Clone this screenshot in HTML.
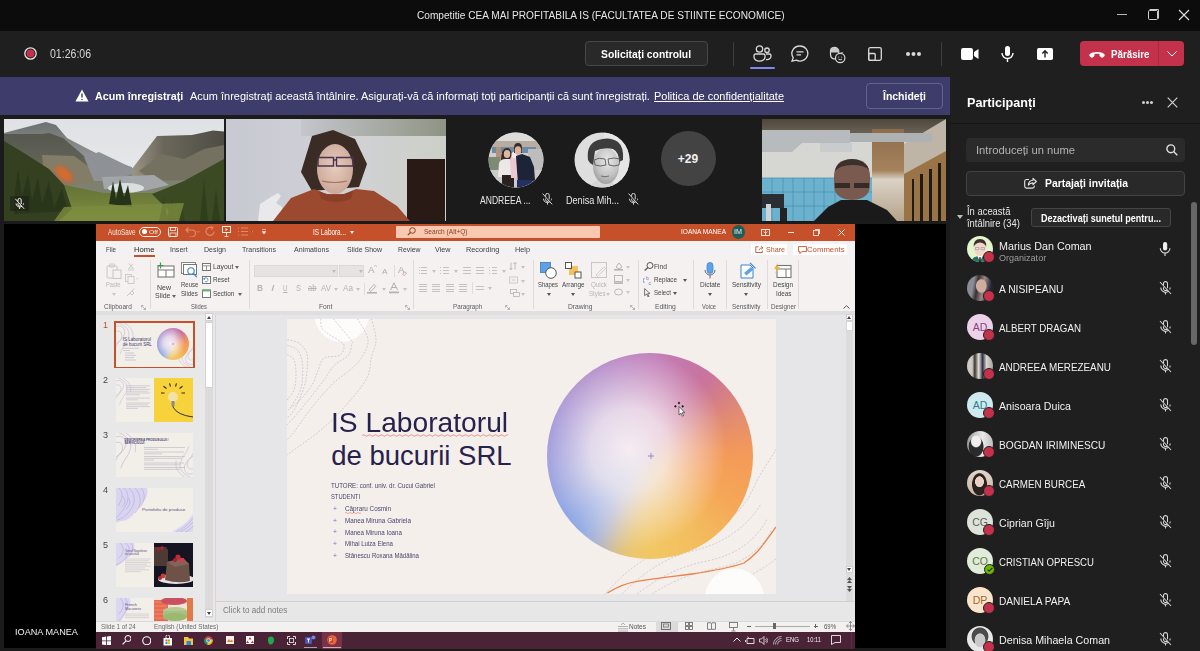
<!DOCTYPE html>
<html><head><meta charset="utf-8">
<style>
*{margin:0;padding:0;box-sizing:border-box}
html,body{width:1200px;height:651px;overflow:hidden;background:#1b1b1b;font-family:"Liberation Sans",sans-serif;position:relative}
.a{position:absolute}
.s{position:absolute;white-space:nowrap;transform-origin:0 50%;line-height:1}
#title{left:0;top:0;width:1200px;height:31px;background:#0c0c0c;color:#e8e8e8}
#tb{left:0;top:31px;width:1200px;height:46px;background:#1f1f1f}
#banner{left:0;top:77px;width:950px;height:38px;background:#3d3c6a;color:#fff}
#panel{left:950px;top:77px;width:250px;height:574px;background:#1f1f1f;color:#fff}
#stage{left:0;top:0;width:950px;height:651px}
#share{left:4px;top:224px;width:942px;height:424px;background:#000}
#ppt{left:96px;top:224px;width:759px;height:424px;background:#f3f2f1;overflow:hidden}
</style></head><body>
<!-- TITLE BAR -->
<div id="title" class="a">
  <div class="s" style="left:417px;top:10px;font-size:11.5px;transform:scaleX(0.88);color:#e6e6e6">Competitie CEA MAI PROFITABILA IS (FACULTATEA DE STIINTE ECONOMICE)</div>
  <div class="a" style="left:1117px;top:13.5px;width:10px;height:1px;background:#b8b8b8"></div>
  <div class="a" style="left:1147.5px;top:10px;width:10px;height:10px;border:1px solid #cfcfcf;border-radius:1.5px"></div>
  <div class="a" style="left:1149px;top:8.5px;width:10px;height:10px;border-top:1px solid #cfcfcf;border-right:1px solid #cfcfcf;border-radius:1.5px"></div>
  <svg class="a" style="left:1178px;top:9px" width="12" height="12" viewBox="0 0 12 12"><path d="M1 1L11 11M11 1L1 11" stroke="#e0e0e0" stroke-width="1.1"/></svg>
</div>
<!-- TOOLBAR -->
<div id="tb" class="a">
  <svg class="a" style="left:23.7px;top:16.3px" width="14" height="14" viewBox="0 0 14 14"><circle cx="6.5" cy="6.5" r="5.7" fill="none" stroke="#e8e8e8" stroke-width="1.3"/><circle cx="6.5" cy="6.5" r="4" fill="#c4314b"/></svg>
  <div class="s" style="left:50px;top:17px;font-size:12px;transform:scaleX(0.88);color:#d6d6d6">01:26:06</div>
  <div class="a" style="left:585px;top:10px;width:123px;height:25px;border:1px solid #474747;border-radius:4px;background:#292929"></div>
  <div class="s" style="left:601px;top:18.2px;font-size:11px;font-weight:bold;transform:scaleX(0.938);color:#fff">Solicitați controlul</div>
  <div class="a" style="left:733px;top:11px;width:1px;height:24px;background:#3e3e3e"></div>
  <!-- people -->
  <svg class="a" style="left:753px;top:14px" width="19" height="17" viewBox="0 0 19 17" fill="none" stroke="#d9d9d9" stroke-width="1.3">
    <circle cx="6.5" cy="4" r="3.2"/><circle cx="14" cy="5.2" r="2.2"/>
    <path d="M1 10.5a1.5 1.5 0 0 1 1.5-1.5h8a1.5 1.5 0 0 1 1.5 1.5v1.5a5 3.8 0 0 1-11 0z"/>
    <path d="M13 9h3.5a1.5 1.5 0 0 1 1.5 1.5v.8a4 3.3 0 0 1-5 3.2"/>
  </svg>
  <div class="a" style="left:750px;top:36px;width:25px;height:2px;border-radius:1px;background:#7f85f5"></div>
  <!-- chat -->
  <svg class="a" style="left:791px;top:14px" width="18" height="17" viewBox="0 0 18 17" fill="none" stroke="#d9d9d9" stroke-width="1.3">
    <path d="M9 1a8 7.5 0 1 1-3.8 14.2L1 16.2l1.2-3.6A8 7.5 0 0 1 9 1z"/><path d="M5.5 6.8h7M5.5 9.8h4.5"/>
  </svg>
  <!-- reactions -->
  <svg class="a" style="left:829px;top:14.5px" width="18" height="18" viewBox="0 0 18 18" fill="none" stroke="#d9d9d9" stroke-width="1.2">
    <path d="M1.5 5Q1.5 1.8 5.2 1.4 9.2 1.6 9.8 5V8L12.5 7 8.2 12Q6.5 13.2 4.5 12.8 1.5 12 1.5 8.5z"/>
    <path d="M1.5 5Q1.5 1.8 5.2 1.4 9.2 1.6 9.8 5V6.5H1.5z" fill="#c9c9c9" stroke="none"/>
    <circle cx="11.2" cy="12" r="4.7" fill="#1f1f1f"/>
    <circle cx="9.8" cy="11" r=".55" fill="#d9d9d9" stroke="none"/><circle cx="12.6" cy="11" r=".55" fill="#d9d9d9" stroke="none"/><path d="M9.4 13.1q1.8 1.5 3.6 0" stroke-width="1"/>
  </svg>
  <!-- rooms -->
  <svg class="a" style="left:868px;top:16px" width="14" height="14" viewBox="0 0 14 14" fill="none" stroke="#d9d9d9" stroke-width="1.3">
    <rect x=".7" y=".7" width="12.6" height="12.6" rx="1.5"/><rect x=".7" y="6.5" width="6.5" height="6.8" rx="1"/>
  </svg>
  <!-- dots -->
  <div class="a" style="left:906px;top:21px;width:4px;height:4px;border-radius:50%;background:#d9d9d9;box-shadow:5.5px 0 #d9d9d9,11px 0 #d9d9d9"></div>
  <div class="a" style="left:941px;top:11px;width:1px;height:24px;background:#3e3e3e"></div>
  <!-- camera -->
  <svg class="a" style="left:961px;top:17px" width="18" height="12" viewBox="0 0 18 12"><rect x="0" y="0" width="12" height="12" rx="2.2" fill="#fff"/><path d="M13 4l4.5-3v10L13 8z" fill="#fff"/></svg>
  <!-- mic -->
  <svg class="a" style="left:1001px;top:15px" width="13" height="16" viewBox="0 0 13 16" fill="none" stroke="#fff" stroke-width="1.4"><rect x="4" y="0" width="5" height="10" rx="2.5" fill="#fff" stroke="none"/><path d="M1 7a5.5 5.5 0 0 0 11 0M6.5 12.5V16"/></svg>
  <!-- share -->
  <svg class="a" style="left:1037px;top:17px" width="16" height="12" viewBox="0 0 16 12"><rect x="0" y="0" width="16" height="12" rx="1.8" fill="#fff"/><path d="M8 9.5V3M5.3 5.5L8 2.8l2.7 2.7" stroke="#1f1f1f" stroke-width="1.4" fill="none"/></svg>
  <!-- leave -->
  <div class="a" style="left:1080px;top:10px;width:104px;height:25px;border-radius:4px;background:#c4314b"></div>
  <div class="a" style="left:1158px;top:10px;width:1px;height:25px;background:#a82a40"></div>
  <svg class="a" style="left:1088.5px;top:19.5px" width="16" height="7" viewBox="0 0 16 7"><path d="M.6 3.2C3 .3 13 .3 15.4 3.2 15.9 3.8 15.8 4.6 15.3 5.2L14.2 6.3C13.7 6.8 12.9 6.8 12.4 6.4L10.9 5.2C10.5 4.9 10.4 4.4 10.5 3.9L10.7 3.2C9 2.6 7 2.6 5.3 3.2L5.5 3.9C5.6 4.4 5.5 4.9 5.1 5.2L3.6 6.4C3.1 6.8 2.3 6.8 1.8 6.3L.7 5.2C.2 4.6.1 3.8.6 3.2z" fill="#fff"/></svg>
  <div class="s" style="left:1110.7px;top:18.2px;font-size:11px;font-weight:bold;transform:scaleX(0.887);color:#fff">Părăsire</div>
  <svg class="a" style="left:1166.5px;top:20px" width="10" height="6" viewBox="0 0 10 6"><path d="M.5.5L5 5 9.5.5" stroke="#fff" stroke-width="1" fill="none"/></svg>
</div>
<div id="stage" class="a">
  <div class="a" style="left:0;top:115px;width:950px;height:536px;background:#1b1b1b"></div>
  <!-- tile1 landscape -->
  <svg class="a" style="left:4px;top:119px" width="220" height="102" viewBox="0 0 220 102" preserveAspectRatio="none">
    <defs>
      <linearGradient id="sky" x1="0" y1="0" x2="0" y2="1"><stop offset="0" stop-color="#dfe1e4"/><stop offset="1" stop-color="#eceded"/></linearGradient>
      <linearGradient id="m1" x1="0" y1="0" x2="0" y2="1"><stop offset="0" stop-color="#6d706f"/><stop offset="1" stop-color="#a9adae"/></linearGradient>
      <linearGradient id="m2" x1="0" y1="0" x2="0" y2="1"><stop offset="0" stop-color="#55584f"/><stop offset="1" stop-color="#6a6a5c"/></linearGradient>
      <linearGradient id="m3" x1="0" y1="0" x2="1" y2="0"><stop offset="0" stop-color="#9a9484"/><stop offset=".35" stop-color="#6a675a"/><stop offset="1" stop-color="#4e4c44"/></linearGradient>
      <linearGradient id="gr" x1="0" y1="0" x2="0" y2="1"><stop offset="0" stop-color="#56652e"/><stop offset="1" stop-color="#7f8f42"/></linearGradient>
      <radialGradient id="fire"><stop offset="0" stop-color="#e2692a"/><stop offset=".6" stop-color="#d06a30" stop-opacity=".8"/><stop offset="1" stop-color="#c0602a" stop-opacity="0"/></radialGradient>
    </defs>
    <rect width="220" height="102" fill="url(#sky)"/>
    <path d="M0 14L17 9.6 42 3 52 6 63 19 82 29 94 35 111 43 128 48 128 62 0 62z" fill="url(#m1)"/><rect x="0" y="55" width="220" height="30" fill="#7d8270"/>
    <path d="M0 15L38 15 45 14 59 19 80 37 100 56 104 62 0 62z" fill="url(#m2)"/>
    <path d="M38 36L70 37 88 50 103 62 60 68 40 56z" fill="#837d68"/>
    <path d="M80 38L95 33 120 45 135 52 110 62 90 62z" fill="#8e9296"/>
    <path d="M128 50L153 17 188 16 209 11.5 220 12.5 220 60 128 60z" fill="url(#m3)"/>
    <path d="M135 52L158 35 180 40 200 30 220 26 220 60 150 62z" fill="#757160"/>
    <path d="M98 58L150 56 165 66 140 72 100 70z" fill="#a2a6a8"/>
    <ellipse cx="122" cy="69" rx="18" ry="5" fill="#dcdfe2"/>
    <path d="M0 48L30 56 60 66 100 74 150 74 220 60 220 102 0 102z" fill="url(#gr)"/>
    <path d="M0 22L20 34 45 50 60 66 68 90 55 102 0 102z" fill="#34401f"/>
    <path d="M148 75L180 62 220 40 220 102 175 102z" fill="#3b4a22"/>
    <path d="M105 85L109 62 112 80 116 60 120 78 124 66 128 88z" fill="#26331b"/>
    <path d="M10 80L14 50 18 78 24 55 28 82 34 58 38 85 45 62 50 88 58 70 64 92 10 95z" fill="#2a361a"/>
    <path d="M155 102L160 78 163 98 168 80 172 100 177 82 181 102z" fill="#34441e"/>
    <path d="M196 102L200 60 204 102zM208 102L212 70 216 102z" fill="#2f3f1c"/>
    <path d="M60 88L180 84 175 102 50 102z" fill="#7d8c3f" opacity=".8"/>
    <ellipse cx="60" cy="55" rx="14" ry="8" fill="url(#fire)" transform="rotate(40 60 55)"/>
    <rect x="6" y="77" width="19" height="15" rx="1" fill="#1b1d18" opacity=".55"/>
    <g transform="translate(10.5,79)" fill="none" stroke="#f2f2f2" stroke-width="1"><path d="M3.5 3.5V2a1.6 1.6 0 0 1 3.2 0V6M6.4 7.4a1.6 1.6 0 0 1-2.9-1V5.2"/><path d="M1.5 5.4a3.8 3.8 0 0 0 6 2.9M9 5.4a3.8 3.8 0 0 1-.4 1.5M5.1 9.2V11M.8.8l8.8 10"/></g>
  </svg>
  <!-- tile2 webcam -->
  <svg class="a" style="left:226px;top:119px" width="220" height="102" viewBox="0 0 220 102" preserveAspectRatio="none">
    <defs>
      <linearGradient id="wall" x1="0" y1="0" x2="1" y2="0"><stop offset="0" stop-color="#c7c9d2"/><stop offset=".5" stop-color="#d0d1d6"/><stop offset="1" stop-color="#cdd0c8"/></linearGradient>
      <radialGradient id="face" cx=".5" cy=".45" r=".6"><stop offset="0" stop-color="#e8cdbd"/><stop offset="1" stop-color="#c9a596"/></radialGradient>
    </defs>
    <rect width="220" height="102" fill="url(#wall)"/>
    <defs><linearGradient id="ceil2" x1="0" y1="0" x2="1" y2="0"><stop offset="0" stop-color="#c4c6cb"/><stop offset="1" stop-color="#8e9484"/></linearGradient></defs><rect x="75" y="0" width="145" height="17" fill="url(#ceil2)"/>
    <rect x="181" y="40" width="38" height="62" fill="#2a1a15"/>
    <path d="M32 102L34 85 45 78 52 74 55 77 50 84 56 88 56 102z" fill="#e9e9ec"/>
    <path d="M75 53L86 17 107 11 129 20 141 45 133 68 86 72z" fill="#3a2c25"/>
    <ellipse cx="109" cy="50" rx="18" ry="25" fill="url(#face)"/>
    <path d="M92 38.5h15.5v8.5H92zM110.5 38.5h16.5v8.5h-16.5zM107.5 41h3" fill="none" stroke="#4a3350" stroke-width="1.4"/>
    <path d="M96 62q13 3 25 0" stroke="#a86e5f" stroke-width="1.2" fill="none"/>
    <path d="M47 102L65 79 88 70 100 75 118 75 130 70 148 72 171 87 184 102z" fill="#9b4a2f"/>
    <path d="M93 72q16 8 34 0l-2 8q-15 6-30 0z" fill="#8a3f29"/>
  </svg>
  <!-- avatar ANDREEA -->
  <svg class="a" style="left:488px;top:132px" width="56" height="56" viewBox="0 0 56 56">
    <defs><clipPath id="c1"><circle cx="28" cy="28" r="27.5"/></clipPath></defs>
    <g clip-path="url(#c1)">
      <rect width="56" height="56" fill="#cfcfcd"/>
      <rect x="0" y="0" width="56" height="11" fill="#dcdcda"/>
      <rect x="0" y="9" width="56" height="8" fill="#b9ada2"/>
      <rect x="4" y="15" width="44" height="6" fill="#6f8aa6"/>
      <rect x="8" y="15" width="5" height="14" fill="#b59280"/>
      <rect x="40" y="17" width="16" height="24" fill="#bdbdbd"/>
      <rect x="0" y="25" width="12" height="13" fill="#7d8a74"/>
      <rect x="0" y="38" width="56" height="18" fill="#cbcbcb"/>
      <path d="M13 28q0-12 6-12 5 0 5 10l-1 12h-9z" fill="#3a2a24"/>
      <ellipse cx="19" cy="22" rx="3.2" ry="4" fill="#dcb8a6"/>
      <path d="M10 45l1-14q2-4 6-4h5l3 6-1 12z" fill="#ede8e8"/>
      <path d="M14 43h12v13H14z" fill="#2a2220"/>
      <path d="M22 28q1-6 5-6t4 6l2 8-2 10h-8z" fill="#ecc8d2"/>
      <ellipse cx="26.5" cy="23" rx="3" ry="3.2" fill="#f1e8ec"/>
      <path d="M26 16q0-5 4-5t4 5v5h-8z" fill="#3a2c26"/>
      <ellipse cx="30" cy="18.5" rx="3.3" ry="4.3" fill="#d9b3a0"/>
      <path d="M28 24l6-2 8 3 4 10 1 13-5 3H30l-1-12z" fill="#1e2438"/>
      <path d="M29 48h15v8H29z" fill="#253060"/>
    </g>
  </svg>
  <div class="s" style="left:479.5px;top:195.5px;font-size:10.3px;transform:scaleX(0.832);color:#e6e6e6">ANDREEA ...</div>
  <svg class="a" style="left:542px;top:193px" width="11" height="12" viewBox="0 0 11 12" fill="none" stroke="#d6d6d6" stroke-width="1"><path d="M3.6 3.8V2.2a1.8 1.8 0 0 1 3.6 0V6.3M6.9 7.6a1.8 1.8 0 0 1-3.3-.9V5.6"/><path d="M1.4 5.7a4 4 0 0 0 6.4 3.1M9.6 5.7a4 4 0 0 1-.4 1.6M5.5 9.7V11.6M.6.6l9.6 10.8"/></svg>
  <!-- avatar Denisa -->
  <svg class="a" style="left:574px;top:132px" width="56" height="56" viewBox="0 0 56 56">
    <defs><clipPath id="c2"><circle cx="28" cy="28" r="27.5"/></clipPath><radialGradient id="dg" cx=".55" cy=".35" r=".7"><stop offset="0" stop-color="#e8e8e8"/><stop offset=".6" stop-color="#c4c4c4"/><stop offset="1" stop-color="#9a9a9a"/></radialGradient></defs>
    <g clip-path="url(#c2)">
      <rect width="56" height="56" fill="#dedede"/>
      <rect x="30" width="26" height="56" fill="#e6e6e6"/>
      <path d="M16 56q2-8 12-9t14 9z" fill="#d4d4d4"/>
      <ellipse cx="32" cy="34" rx="13" ry="18" fill="url(#dg)"/>
      <path d="M14 28Q12 12 24 8q12-4 20 2 6 5 5 18l-4 2q0-10-6-13-10-2-18 2l-2 14-3-2z" fill="#3c3c3c"/>
      <path d="M20 28q5-3 11-1l1 6q-6 2-11 0zM34 27q6-2 12 0l-1 6q-5 2-10 0z" fill="none" stroke="#5a5a5a" stroke-width=".9"/>
      <path d="M27 44q4 1.5 8 0" stroke="#7a6a6a" stroke-width="1" fill="none"/>
    </g>
  </svg>
  <div class="s" style="left:566px;top:195.5px;font-size:10.3px;transform:scaleX(0.882);color:#e6e6e6">Denisa Mih...</div>
  <svg class="a" style="left:628px;top:193px" width="11" height="12" viewBox="0 0 11 12" fill="none" stroke="#d6d6d6" stroke-width="1"><path d="M3.6 3.8V2.2a1.8 1.8 0 0 1 3.6 0V6.3M6.9 7.6a1.8 1.8 0 0 1-3.3-.9V5.6"/><path d="M1.4 5.7a4 4 0 0 0 6.4 3.1M9.6 5.7a4 4 0 0 1-.4 1.6M5.5 9.7V11.6M.6.6l9.6 10.8"/></svg>
  <!-- +29 -->
  <div class="a" style="left:660.5px;top:130.5px;width:55px;height:55px;border-radius:50%;background:#434343"></div>
  <div class="s" style="left:660.5px;top:153px;width:55px;text-align:center;font-size:12px;font-weight:bold;color:#f0f0f0;transform:none">+29</div>
  <!-- tile3 office -->
  <svg class="a" style="left:762px;top:119px" width="184" height="102" viewBox="0 0 184 102" preserveAspectRatio="none">
    <defs>
      <linearGradient id="ceil" x1="0" y1="0" x2="0" y2="1"><stop offset="0" stop-color="#4f463c"/><stop offset="1" stop-color="#6e6558"/></linearGradient>
      <linearGradient id="corr" x1="0" y1="0" x2="0" y2="1"><stop offset="0" stop-color="#8d6d4c"/><stop offset=".45" stop-color="#a5825c"/><stop offset=".55" stop-color="#d9d3c6"/><stop offset="1" stop-color="#b6a38a"/></linearGradient>
    </defs>
    <rect width="184" height="102" fill="#d6d7d2"/>
    <rect width="184" height="16" fill="url(#ceil)"/>
    <rect x="110" y="10" width="32" height="92" fill="url(#corr)"/>
    <path d="M142 25L184 0 184 102 142 102z" fill="#bfb5a6"/>
    <path d="M142 55L184 32 184 102 142 102z" fill="#9a7446"/>
    <path d="M150 60h2v42h-2zM158 55h3v47h-3zM167 50h3v52h-3zM176 44h3v58h-3z" fill="#1e1a16"/>
    <path d="M0 11h88v13H40l-10 9H0z" fill="#b7bbbd"/>
    <path d="M88 14h82v9H88z" fill="#aeb2b3"/>
    <path d="M58 24h32v9H58z" fill="#c9cccc"/>
    <rect x="0" y="59" width="110" height="43" fill="#6cb2cf"/>
    <path d="M0 59h110M0 73h110M0 87h110" stroke="#4d93b3" stroke-width=".8"/>
    <path d="M10 59v43M21 59v43M31 59v43M42 59v43M52 59v43M62 59v43M73 59v43M84 59v43M94 59v43" stroke="#3c8aaa" stroke-width=".6"/>
    <rect x="0" y="75" width="22" height="14" fill="#2a2e33"/>
    <rect x="4" y="85" width="5" height="17" fill="#cfd3d6"/>
    <rect x="18" y="89" width="7" height="13" fill="#222"/>
    <path d="M72 58q0-18 18-18 18 0 18 18v8q0 14-18 15-18-1-18-15z" fill="#7a5a4f"/>
    <path d="M73 52q2-11 17-12 14 1 17 11-4-5-17-5-12 0-17 6z" fill="#3a302c"/>
    <path d="M73 64h15v5H73zM92 64h15v5H92z" fill="#2a2220" opacity=".85"/>
    <path d="M52 102L66 88 79 81 105 81 125 91 135 102z" fill="#1b1a1a"/>
  </svg>
</div>
<!-- BANNER -->
<div id="banner" class="a">
  <svg class="a" style="left:75px;top:12px" width="14" height="13" viewBox="0 0 14 13"><path d="M7 .5L13.6 12.5H.4z" fill="#fff"/><path d="M7 4.5v4M7 10v1" stroke="#3d3c6a" stroke-width="1.4"/></svg>
  <div class="s" style="left:95px;top:14.2px;font-size:11px;font-weight:bold;transform:scaleX(0.976)">Acum înregistrați</div>
  <div class="s" style="left:190px;top:14.2px;font-size:11px;transform:scaleX(0.995)">Acum înregistrați această întâlnire. Asigurați-vă că informați toți participanții că sunt înregistrați.</div>
  <div class="s" style="left:654px;top:14.2px;font-size:11px;transform:scaleX(0.998);text-decoration:underline">Politica de confidențialitate</div>
  <div class="a" style="left:866.2px;top:6.3px;width:76.7px;height:25.5px;border:1px solid #64638c;border-radius:4px"></div>
  <div class="s" style="left:883px;top:14.2px;font-size:11px;font-weight:bold;transform:scaleX(0.951)">Închideți</div>
</div>
<!-- PANEL -->
<div id="panel" class="a">
  <div class="s" style="left:16.5px;top:19.5px;font-size:12.5px;font-weight:bold;transform:scaleX(1.01);color:#fff">Participanți</div>
  <div class="a" style="left:192px;top:24px;width:3px;height:3px;border-radius:50%;background:#d0d0d0;box-shadow:4px 0 #d0d0d0,8px 0 #d0d0d0"></div>
  <svg class="a" style="left:217px;top:20px" width="11" height="11" viewBox="0 0 11 11"><path d="M.7.7l9.6 9.6M10.3.7L.7 10.3" stroke="#d6d6d6" stroke-width="1.1"/></svg>
  <div class="a" style="left:0;top:46px;width:250px;height:1px;background:#151515"></div>
  <div class="a" style="left:16px;top:60.5px;width:219px;height:24.5px;border-radius:4px;background:#2b2b2b"></div>
  <div class="s" style="left:26px;top:67.5px;font-size:11.5px;transform:scaleX(0.975);color:#b3b3b3">Introduceți un nume</div>
  <svg class="a" style="left:215.5px;top:66.5px" width="12" height="12" viewBox="0 0 12 12" fill="none" stroke="#e0e0e0" stroke-width="1.4"><circle cx="4.8" cy="4.8" r="3.9"/><path d="M7.6 7.6L11.3 11.3"/></svg>
  <div class="a" style="left:16px;top:93.5px;width:219px;height:25px;border-radius:4px;background:#292929;border:1px solid #434343"></div>
  <svg class="a" style="left:74px;top:100px" width="13" height="12" viewBox="0 0 13 12" fill="none" stroke="#e8e8e8" stroke-width="1.1"><path d="M5 2.5H2.5a1.8 1.8 0 0 0-1.8 1.8v5a1.8 1.8 0 0 0 1.8 1.8h6a1.8 1.8 0 0 0 1.8-1.8V8.5"/><path d="M12.3 4.5L9 1.3v1.9C6.5 3.3 4.5 4.8 4.3 8.2 5.5 6.5 7 5.9 9 5.9v1.8z" stroke-linejoin="round"/></svg>
  <div class="s" style="left:94.5px;top:101.3px;font-size:10.5px;font-weight:bold;transform:scaleX(0.988);color:#fff">Partajați invitația</div>
  <svg class="a" style="left:7px;top:138px" width="6" height="4" viewBox="0 0 6 4"><path d="M0 0h6L3 4z" fill="#bdbdbd"/></svg>
  <div class="s" style="left:17px;top:130px;font-size:10px;transform:scaleX(0.94);color:#e6e6e6">În această</div>
  <div class="s" style="left:17px;top:141.5px;font-size:10px;transform:scaleX(0.94);color:#e6e6e6">întâlnire (34)</div>
  <div class="a" style="left:81px;top:131px;width:140px;height:18.5px;border-radius:3px;background:#292929;border:1px solid #454545"></div>
  <div class="s" style="left:91px;top:136px;font-size:10.5px;font-weight:bold;transform:scaleX(0.86);color:#fff">Dezactivați sunetul pentru...</div>
  <div class="a" style="left:240.5px;top:124.5px;width:6px;height:143px;border-radius:3px;background:#676767"></div>
<div class="a" style="left:17px;top:159px;width:26px;height:26px;border-radius:50%;background:#e4f4cc;overflow:hidden"><svg width="26" height="26" viewBox="0 0 26 26" style="position:absolute;left:0;top:0"><path d="M4 26q1-6 9-6t9 6z" fill="#2f6d6a"/><path d="M10.5 20h5l-2.5 6z" fill="#fff"/><path d="M12.4 21h1.2l.4 5h-2z" fill="#222"/><ellipse cx="13" cy="12.5" rx="6" ry="7.5" fill="#f3d6c8"/><path d="M6.8 11q-.5-8 6.2-8t6.2 8q-1-4-6.2-4.5-5.2.5-6.2 4.5z" fill="#3b302b"/><path d="M8.5 11.5h3.5v2.2H8.5zM14 11.5h3.5v2.2H14z" fill="none" stroke="#7a8aa0" stroke-width=".5"/></svg></div>
<div class="a" style="left:33px;top:174px;width:12px;height:12px;border-radius:50%;background:#c4314b;border:1.8px solid #1f1f1f"></div>
<div class="s" style="left:48.5px;top:163.7px;font-size:11px;transform:scaleX(0.977);color:#f0f0f0">Marius Dan Coman</div>
<div class="s" style="left:48.5px;top:175.7px;font-size:9.5px;transform:scaleX(0.95);color:#9b9b9b">Organizator</div>
<svg class="a" style="left:209px;top:165px" width="12" height="14" viewBox="0 0 12 14"><rect x="4" y="0" width="4.2" height="8.5" rx="2.1" fill="#f0f0f0"/><path d="M1.3 6.3a4.8 4.8 0 0 0 9.6 0M6 11v3" stroke="#e0e0e0" stroke-width="1.1" fill="none"/></svg>
<div class="a" style="left:17px;top:198px;width:26px;height:26px;border-radius:50%;background:radial-gradient(ellipse 22% 28% at 55% 42%,#cfae9e 0 85%,transparent 100%),linear-gradient(100deg,#8a8d98 0 25%,#3a3030 40%,#9a8a86 60%,#20263a 85%);overflow:hidden"></div>
<div class="a" style="left:33px;top:213px;width:12px;height:12px;border-radius:50%;background:#c4314b;border:1.8px solid #1f1f1f"></div>
<div class="s" style="left:48.5px;top:206.7px;font-size:11px;transform:scaleX(0.934);color:#f0f0f0">A NISIPEANU</div>
<svg class="a" style="left:209px;top:204px" width="13" height="14" viewBox="0 0 13 14" fill="none" stroke="#d6d6d6" stroke-width="1.05"><path d="M4.5 4.5V2.6a2 2 0 0 1 4 0V7.2M8.2 8.6a2 2 0 0 1-3.7-1.1V6.3"/><path d="M1.8 6.6a4.7 4.7 0 0 0 7.6 3.6M11.2 6.6a4.7 4.7 0 0 1-.5 1.9M6.5 11.3V13.6M1 1l11 12"/></svg>
<div class="a" style="left:17px;top:237px;width:26px;height:26px;border-radius:50%;background:#ebd2e8;overflow:hidden"><span style="position:absolute;left:0;top:0;width:26px;line-height:26px;text-align:center;font-size:10.5px;color:#8b3f7f">AD</span></div>
<div class="a" style="left:33px;top:252px;width:12px;height:12px;border-radius:50%;background:#c4314b;border:1.8px solid #1f1f1f"></div>
<div class="s" style="left:48.5px;top:245.7px;font-size:11px;transform:scaleX(0.886);color:#f0f0f0">ALBERT DRAGAN</div>
<svg class="a" style="left:209px;top:243px" width="13" height="14" viewBox="0 0 13 14" fill="none" stroke="#d6d6d6" stroke-width="1.05"><path d="M4.5 4.5V2.6a2 2 0 0 1 4 0V7.2M8.2 8.6a2 2 0 0 1-3.7-1.1V6.3"/><path d="M1.8 6.6a4.7 4.7 0 0 0 7.6 3.6M11.2 6.6a4.7 4.7 0 0 1-.5 1.9M6.5 11.3V13.6M1 1l11 12"/></svg>
<div class="a" style="left:17px;top:276px;width:26px;height:26px;border-radius:50%;background:linear-gradient(90deg,#cfcac4 0 20%,#3a3434 30%,#e6e0dc 45%,#2e3142 60%,#d8d4cf 75%,#a9a39c);overflow:hidden"></div>
<div class="a" style="left:33px;top:291px;width:12px;height:12px;border-radius:50%;background:#c4314b;border:1.8px solid #1f1f1f"></div>
<div class="s" style="left:48.5px;top:284.7px;font-size:11px;transform:scaleX(0.898);color:#f0f0f0">ANDREEA MEREZEANU</div>
<svg class="a" style="left:209px;top:282px" width="13" height="14" viewBox="0 0 13 14" fill="none" stroke="#d6d6d6" stroke-width="1.05"><path d="M4.5 4.5V2.6a2 2 0 0 1 4 0V7.2M8.2 8.6a2 2 0 0 1-3.7-1.1V6.3"/><path d="M1.8 6.6a4.7 4.7 0 0 0 7.6 3.6M11.2 6.6a4.7 4.7 0 0 1-.5 1.9M6.5 11.3V13.6M1 1l11 12"/></svg>
<div class="a" style="left:17px;top:315px;width:26px;height:26px;border-radius:50%;background:#cfeaef;overflow:hidden"><span style="position:absolute;left:0;top:0;width:26px;line-height:26px;text-align:center;font-size:10.5px;color:#2e7d8a">AD</span></div>
<div class="a" style="left:33px;top:330px;width:12px;height:12px;border-radius:50%;background:#c4314b;border:1.8px solid #1f1f1f"></div>
<div class="s" style="left:48.5px;top:323.7px;font-size:11px;transform:scaleX(0.965);color:#f0f0f0">Anisoara Duica</div>
<svg class="a" style="left:209px;top:321px" width="13" height="14" viewBox="0 0 13 14" fill="none" stroke="#d6d6d6" stroke-width="1.05"><path d="M4.5 4.5V2.6a2 2 0 0 1 4 0V7.2M8.2 8.6a2 2 0 0 1-3.7-1.1V6.3"/><path d="M1.8 6.6a4.7 4.7 0 0 0 7.6 3.6M11.2 6.6a4.7 4.7 0 0 1-.5 1.9M6.5 11.3V13.6M1 1l11 12"/></svg>
<div class="a" style="left:17px;top:354px;width:26px;height:26px;border-radius:50%;background:radial-gradient(ellipse 22% 25% at 35% 40%,#f0eeee 0 80%,transparent 100%),radial-gradient(ellipse 30% 40% at 35% 60%,#2b2b2b 0 90%,transparent 100%),linear-gradient(90deg,#9a9a9a,#e9e9e9 60%,#bdbdbd);overflow:hidden"></div>
<div class="a" style="left:33px;top:369px;width:12px;height:12px;border-radius:50%;background:#c4314b;border:1.8px solid #1f1f1f"></div>
<div class="s" style="left:48.5px;top:362.7px;font-size:11px;transform:scaleX(0.921);color:#f0f0f0">BOGDAN IRIMINESCU</div>
<svg class="a" style="left:209px;top:360px" width="13" height="14" viewBox="0 0 13 14" fill="none" stroke="#d6d6d6" stroke-width="1.05"><path d="M4.5 4.5V2.6a2 2 0 0 1 4 0V7.2M8.2 8.6a2 2 0 0 1-3.7-1.1V6.3"/><path d="M1.8 6.6a4.7 4.7 0 0 0 7.6 3.6M11.2 6.6a4.7 4.7 0 0 1-.5 1.9M6.5 11.3V13.6M1 1l11 12"/></svg>
<div class="a" style="left:17px;top:393px;width:26px;height:26px;border-radius:50%;background:radial-gradient(ellipse 18% 22% at 48% 45%,#e9d0c0 0 90%,transparent 100%),radial-gradient(ellipse 30% 45% at 48% 55%,#2a2220 0 90%,transparent 100%),linear-gradient(#e2d6ca,#c9b4a2);overflow:hidden"></div>
<div class="a" style="left:33px;top:408px;width:12px;height:12px;border-radius:50%;background:#c4314b;border:1.8px solid #1f1f1f"></div>
<div class="s" style="left:48.5px;top:401.7px;font-size:11px;transform:scaleX(0.893);color:#f0f0f0">CARMEN BURCEA</div>
<svg class="a" style="left:209px;top:399px" width="13" height="14" viewBox="0 0 13 14" fill="none" stroke="#d6d6d6" stroke-width="1.05"><path d="M4.5 4.5V2.6a2 2 0 0 1 4 0V7.2M8.2 8.6a2 2 0 0 1-3.7-1.1V6.3"/><path d="M1.8 6.6a4.7 4.7 0 0 0 7.6 3.6M11.2 6.6a4.7 4.7 0 0 1-.5 1.9M6.5 11.3V13.6M1 1l11 12"/></svg>
<div class="a" style="left:17px;top:432px;width:26px;height:26px;border-radius:50%;background:#dde3da;overflow:hidden"><span style="position:absolute;left:0;top:0;width:26px;line-height:26px;text-align:center;font-size:10.5px;color:#5a6456">CG</span></div>
<div class="a" style="left:33px;top:447px;width:12px;height:12px;border-radius:50%;background:#c4314b;border:1.8px solid #1f1f1f"></div>
<div class="s" style="left:48.5px;top:440.7px;font-size:11px;transform:scaleX(0.964);color:#f0f0f0">Ciprian Gîju</div>
<svg class="a" style="left:209px;top:438px" width="13" height="14" viewBox="0 0 13 14" fill="none" stroke="#d6d6d6" stroke-width="1.05"><path d="M4.5 4.5V2.6a2 2 0 0 1 4 0V7.2M8.2 8.6a2 2 0 0 1-3.7-1.1V6.3"/><path d="M1.8 6.6a4.7 4.7 0 0 0 7.6 3.6M11.2 6.6a4.7 4.7 0 0 1-.5 1.9M6.5 11.3V13.6M1 1l11 12"/></svg>
<div class="a" style="left:17px;top:471px;width:26px;height:26px;border-radius:50%;background:#e1ebd9;overflow:hidden"><span style="position:absolute;left:0;top:0;width:26px;line-height:26px;text-align:center;font-size:10.5px;color:#5e7a4a">CO</span></div>
<div class="a" style="left:34px;top:487px;width:11px;height:11px;border-radius:50%;background:#6bb700;border:1.5px solid #1f1f1f"></div>
<svg class="a" style="left:36.5px;top:490px" width="6" height="5" viewBox="0 0 6 5"><path d="M.6 2.6l1.6 1.5L5.4.8" stroke="#1f1f1f" stroke-width="1.1" fill="none"/></svg>
<div class="s" style="left:48.5px;top:479.7px;font-size:11px;transform:scaleX(0.873);color:#f0f0f0">CRISTIAN OPRESCU</div>
<svg class="a" style="left:209px;top:477px" width="13" height="14" viewBox="0 0 13 14" fill="none" stroke="#d6d6d6" stroke-width="1.05"><path d="M4.5 4.5V2.6a2 2 0 0 1 4 0V7.2M8.2 8.6a2 2 0 0 1-3.7-1.1V6.3"/><path d="M1.8 6.6a4.7 4.7 0 0 0 7.6 3.6M11.2 6.6a4.7 4.7 0 0 1-.5 1.9M6.5 11.3V13.6M1 1l11 12"/></svg>
<div class="a" style="left:17px;top:510px;width:26px;height:26px;border-radius:50%;background:#fbe4cc;overflow:hidden"><span style="position:absolute;left:0;top:0;width:26px;line-height:26px;text-align:center;font-size:10.5px;color:#a06b30">DP</span></div>
<div class="a" style="left:33px;top:525px;width:12px;height:12px;border-radius:50%;background:#c4314b;border:1.8px solid #1f1f1f"></div>
<div class="s" style="left:48.5px;top:518.7px;font-size:11px;transform:scaleX(0.923);color:#f0f0f0">DANIELA PAPA</div>
<svg class="a" style="left:209px;top:516px" width="13" height="14" viewBox="0 0 13 14" fill="none" stroke="#d6d6d6" stroke-width="1.05"><path d="M4.5 4.5V2.6a2 2 0 0 1 4 0V7.2M8.2 8.6a2 2 0 0 1-3.7-1.1V6.3"/><path d="M1.8 6.6a4.7 4.7 0 0 0 7.6 3.6M11.2 6.6a4.7 4.7 0 0 1-.5 1.9M6.5 11.3V13.6M1 1l11 12"/></svg>
<div class="a" style="left:17px;top:549px;width:26px;height:26px;border-radius:50%;background:radial-gradient(ellipse 22% 28% at 50% 55%,#c9c9c9 0 90%,transparent 100%),radial-gradient(ellipse 34% 36% at 50% 40%,#4a4a4a 0 90%,transparent 100%),#e8e8e8;overflow:hidden"></div>
<div class="a" style="left:33px;top:564px;width:12px;height:12px;border-radius:50%;background:#c4314b;border:1.8px solid #1f1f1f"></div>
<div class="s" style="left:48.5px;top:557.7px;font-size:11px;transform:scaleX(0.971);color:#f0f0f0">Denisa Mihaela Coman</div>
<svg class="a" style="left:209px;top:555px" width="13" height="14" viewBox="0 0 13 14" fill="none" stroke="#d6d6d6" stroke-width="1.05"><path d="M4.5 4.5V2.6a2 2 0 0 1 4 0V7.2M8.2 8.6a2 2 0 0 1-3.7-1.1V6.3"/><path d="M1.8 6.6a4.7 4.7 0 0 0 7.6 3.6M11.2 6.6a4.7 4.7 0 0 1-.5 1.9M6.5 11.3V13.6M1 1l11 12"/></svg>
</div>
<div id="share" class="a"></div>
<div class="s" style="left:15.0px;top:627.9px;font-size:9.2px;color:#f0f0f0;transform:scaleX(0.994);">IOANA MANEA</div>
<!--PPT-->
<div class="a" style="left:96.0px;top:224.0px;width:759.0px;height:424.0px;background:#f4f1f1"></div>
<div class="a" style="left:96.0px;top:224.0px;width:759.0px;height:17.0px;background:#c5502a"></div>
<div class="s" style="left:108.0px;top:227.8px;font-size:8.3px;color:#fbe9e2;transform:scaleX(0.767);">AutoSave</div>
<div class="a" style="left:139.0px;top:227.0px;width:22.0px;height:9.5px;border:1px solid #fbe9e2;border-radius:5px"></div>
<div class="a" style="left:141.5px;top:229.3px;width:5.0px;height:5.0px;background:#fff;border-radius:50%"></div>
<div class="s" style="left:149.0px;top:228.8px;font-size:6px;color:#fbe9e2;transform:scaleX(1.140);">Off</div>
<svg class="a" style="left:168.0px;top:226.5px;" width="10" height="10" viewBox="0 0 10 10"><rect x=".5" y=".5" width="9" height="9" rx="1" fill="none" stroke="#fbe9e2" stroke-width="1"/><rect x="2.5" y=".5" width="5" height="3" fill="none" stroke="#fbe9e2" stroke-width=".8"/><rect x="2" y="6" width="6" height="3.5" fill="none" stroke="#fbe9e2" stroke-width=".8"/></svg>
<svg class="a" style="left:184.0px;top:226.0px;" width="16" height="11" viewBox="0 0 16 11"><path d="M2 4h6a3.5 3.5 0 0 1 0 7H5M4.5 1.5L2 4l2.5 2.5" fill="none" stroke="#e08a6a" stroke-width="1.1"/><path d="M12.5 5l1.5 1.5L15.5 5" fill="none" stroke="#e08a6a" stroke-width=".8"/></svg>
<svg class="a" style="left:205.0px;top:226.0px;" width="11" height="11" viewBox="0 0 11 11"><path d="M9 5.5A4 4 0 1 1 6.5 1.7M6 .3l2 1.5-1.6 1.8" fill="none" stroke="#e08a6a" stroke-width="1.1"/></svg>
<svg class="a" style="left:222.0px;top:225.5px;" width="9" height="12" viewBox="0 0 9 12"><rect x=".5" y=".5" width="8" height="6" fill="none" stroke="#fbe9e2" stroke-width="1"/><path d="M3.5 2l2.5 1.5L3.5 5z" fill="#fbe9e2"/><path d="M4.5 7v3M2.5 10.5h4" stroke="#fbe9e2" stroke-width=".9"/></svg>
<svg class="a" style="left:237.0px;top:226.0px;" width="17" height="11" viewBox="0 0 17 11"><path d="M1 2h1M4 2h7M1 5.5h1M4 5.5h7M1 9h1M4 9h7M13.5 5l1.2 1.2L16 5" stroke="#e08a6a" stroke-width="1"/></svg>
<svg class="a" style="left:262.0px;top:228.5px;" width="4" height="6" viewBox="0 0 4 6"><path d="M0 .5h4M0 2.5h4L2 5z" fill="#fbe9e2" stroke="#fbe9e2" stroke-width=".6"/></svg>
<div class="s" style="left:313.0px;top:227.8px;font-size:8.3px;color:#fff;transform:scaleX(0.769);">IS Labora...</div>
<svg class="a" style="left:349.5px;top:231.0px;" width="4" height="3" viewBox="0 0 4 3"><path d="M0 0h4L2 3z" fill="#fff"/></svg>
<div class="a" style="left:396.0px;top:225.5px;width:203.5px;height:12.5px;background:#f9c8b0;border-radius:1px"></div>
<svg class="a" style="left:407.0px;top:227.0px;" width="9" height="9" viewBox="0 0 9 9"><circle cx="5.5" cy="3.5" r="2.8" fill="none" stroke="#8a4025" stroke-width="1"/><path d="M3.5 5.5L.8 8.2" stroke="#8a4025" stroke-width="1.1"/></svg>
<div class="s" style="left:423.5px;top:228.0px;font-size:8px;color:#8a4025;transform:scaleX(0.819);">Search (Alt+Q)</div>
<div class="s" style="left:681.0px;top:228.0px;font-size:8px;color:#fff;transform:scaleX(0.816);">IOANA MANEA</div>
<div class="a" style="left:731.7px;top:225.3px;width:13.3px;height:13.3px;background:#1f5e58;border-radius:50%"></div>
<div class="s" style="left:734.3px;top:228.8px;font-size:6.5px;color:#e8f0ee;transform:scaleX(1.108);">IM</div>
<svg class="a" style="left:761.0px;top:228.5px;" width="9" height="7" viewBox="0 0 9 7"><rect x=".5" y=".5" width="8" height="6" fill="none" stroke="#fbe9e2" stroke-width="1"/><path d="M4.5 1v5M2.5 2.5l2 2 2-2" fill="none" stroke="#fbe9e2" stroke-width=".8"/></svg>
<div class="a" style="left:787.5px;top:231.5px;width:6.0px;height:1.0px;background:#fbe9e2"></div>
<svg class="a" style="left:812.5px;top:228.5px;" width="7" height="7" viewBox="0 0 7 7"><rect x=".5" y="1.5" width="5" height="5" fill="none" stroke="#fbe9e2" stroke-width=".9"/><path d="M2 .5h4.5V5" fill="none" stroke="#fbe9e2" stroke-width=".9"/></svg>
<svg class="a" style="left:838.0px;top:229.0px;" width="7" height="7" viewBox="0 0 7 7"><path d="M.5.5l6 6M6.5.5l-6 6" stroke="#fbe9e2" stroke-width="1"/></svg>
<div class="a" style="left:96.0px;top:241.0px;width:759.0px;height:17.0px;background:#f3f1f1"></div>
<div class="s" style="left:106.0px;top:246.2px;font-size:7.6px;color:#3f3f3f;transform:scaleX(0.817);">File</div>
<div class="s" style="left:134.0px;top:246.2px;font-size:7.6px;color:#262626;transform:scaleX(1.006);">Home</div>
<div class="s" style="left:170.0px;top:246.2px;font-size:7.6px;color:#3f3f3f;transform:scaleX(0.926);">Insert</div>
<div class="s" style="left:204.0px;top:246.2px;font-size:7.6px;color:#3f3f3f;transform:scaleX(0.930);">Design</div>
<div class="s" style="left:242.4px;top:246.2px;font-size:7.6px;color:#3f3f3f;transform:scaleX(0.922);">Transitions</div>
<div class="s" style="left:294.0px;top:246.2px;font-size:7.6px;color:#3f3f3f;transform:scaleX(0.931);">Animations</div>
<div class="s" style="left:346.5px;top:246.2px;font-size:7.6px;color:#3f3f3f;transform:scaleX(0.921);">Slide Show</div>
<div class="s" style="left:397.6px;top:246.2px;font-size:7.6px;color:#3f3f3f;transform:scaleX(0.899);">Review</div>
<div class="s" style="left:435.0px;top:246.2px;font-size:7.6px;color:#3f3f3f;transform:scaleX(0.943);">View</div>
<div class="s" style="left:466.0px;top:246.2px;font-size:7.6px;color:#3f3f3f;transform:scaleX(0.961);">Recording</div>
<div class="s" style="left:514.7px;top:246.2px;font-size:7.6px;color:#3f3f3f;transform:scaleX(0.960);">Help</div>
<div class="a" style="left:134.0px;top:254.8px;width:21.0px;height:2.0px;background:#c5502a"></div>
<div class="a" style="left:750.8px;top:243.7px;width:36.2px;height:11.6px;background:#fff"></div>
<svg class="a" style="left:755.0px;top:246.0px;" width="9" height="7" viewBox="0 0 9 7"><path d="M3.5.8H.8v5.7h6.5V4.5M4 4.3C4.5 2.5 6 1.8 7.8 1.8M6.3.3l1.6 1.5-1.6 1.5" fill="none" stroke="#c5502a" stroke-width=".9"/></svg>
<div class="s" style="left:765.5px;top:245.5px;font-size:8px;color:#c5502a;transform:scaleX(0.890);">Share</div>
<div class="a" style="left:793.3px;top:243.7px;width:53.4px;height:11.6px;background:#fff"></div>
<svg class="a" style="left:797.5px;top:246.0px;" width="9" height="8" viewBox="0 0 9 8"><path d="M.6.6h7.8v5H4L1.8 7.5V5.6H.6z" fill="none" stroke="#c5502a" stroke-width=".9"/></svg>
<div class="s" style="left:806.5px;top:245.5px;font-size:8px;color:#c5502a;transform:scaleX(0.970);">Comments</div>
<div class="a" style="left:96.0px;top:258.0px;width:759.0px;height:53.0px;background:#f5f1f1"></div>
<div class="a" style="left:96.0px;top:311.0px;width:759.0px;height:3.5px;background:#e0dede"></div>
<div class="a" style="left:149.7px;top:260.0px;width:0.8px;height:49.0px;background:#dddada"></div>
<div class="a" style="left:248.5px;top:260.0px;width:0.8px;height:49.0px;background:#dddada"></div>
<div class="a" style="left:412.7px;top:260.0px;width:0.8px;height:49.0px;background:#dddada"></div>
<div class="a" style="left:532.5px;top:260.0px;width:0.8px;height:49.0px;background:#dddada"></div>
<div class="a" style="left:637.5px;top:260.0px;width:0.8px;height:49.0px;background:#dddada"></div>
<div class="a" style="left:693.3px;top:260.0px;width:0.8px;height:49.0px;background:#dddada"></div>
<div class="a" style="left:725.8px;top:260.0px;width:0.8px;height:49.0px;background:#dddada"></div>
<div class="a" style="left:766.7px;top:260.0px;width:0.8px;height:49.0px;background:#dddada"></div>
<div class="a" style="left:797.5px;top:260.0px;width:0.8px;height:49.0px;background:#dddada"></div>
<div class="s" style="left:104.0px;top:303.3px;font-size:7.4px;color:#595959;transform:scaleX(0.878);">Clipboard</div>
<div class="s" style="left:191.0px;top:303.3px;font-size:7.4px;color:#595959;transform:scaleX(0.784);">Slides</div>
<div class="s" style="left:319.3px;top:303.3px;font-size:7.4px;color:#595959;transform:scaleX(0.905);">Font</div>
<div class="s" style="left:453.3px;top:303.3px;font-size:7.4px;color:#595959;transform:scaleX(0.845);">Paragraph</div>
<div class="s" style="left:568.0px;top:303.3px;font-size:7.4px;color:#595959;transform:scaleX(0.903);">Drawing</div>
<div class="s" style="left:655.0px;top:303.3px;font-size:7.4px;color:#595959;transform:scaleX(0.919);">Editing</div>
<div class="s" style="left:702.0px;top:303.3px;font-size:7.4px;color:#595959;transform:scaleX(0.773);">Voice</div>
<div class="s" style="left:732.0px;top:303.3px;font-size:7.4px;color:#595959;transform:scaleX(0.856);">Sensitivity</div>
<div class="s" style="left:771.0px;top:303.3px;font-size:7.4px;color:#595959;transform:scaleX(0.844);">Designer</div>
<svg class="a" style="left:141.0px;top:304.5px;" width="5" height="5" viewBox="0 0 5 5"><path d="M.5.5h2M.5.5v2M1.2 1.2l3 3M4.5 2.5v2h-2" fill="none" stroke="#9a9a9a" stroke-width=".7"/></svg>
<svg class="a" style="left:405.2px;top:304.5px;" width="5" height="5" viewBox="0 0 5 5"><path d="M.5.5h2M.5.5v2M1.2 1.2l3 3M4.5 2.5v2h-2" fill="none" stroke="#9a9a9a" stroke-width=".7"/></svg>
<svg class="a" style="left:504.5px;top:304.5px;" width="5" height="5" viewBox="0 0 5 5"><path d="M.5.5h2M.5.5v2M1.2 1.2l3 3M4.5 2.5v2h-2" fill="none" stroke="#9a9a9a" stroke-width=".7"/></svg>
<svg class="a" style="left:629.5px;top:304.5px;" width="5" height="5" viewBox="0 0 5 5"><path d="M.5.5h2M.5.5v2M1.2 1.2l3 3M4.5 2.5v2h-2" fill="none" stroke="#9a9a9a" stroke-width=".7"/></svg>
<svg class="a" style="left:843.0px;top:305.0px;" width="7" height="4" viewBox="0 0 7 4"><path d="M.5 3.5L3.5.7l3 2.8" fill="none" stroke="#555" stroke-width="1"/></svg>
<svg class="a" style="left:106.0px;top:262.5px;" width="16" height="16" viewBox="0 0 16 16"><rect x="1" y="3" width="10" height="12" rx="1" fill="none" stroke="#c8c6c6" stroke-width="1"/><rect x="3.5" y="1" width="5" height="3" rx="1" fill="none" stroke="#c8c6c6" stroke-width="1"/><rect x="7" y="7" width="8" height="8.5" fill="#f5f1f1" stroke="#c8c6c6" stroke-width="1"/></svg>
<div class="s" style="left:106.0px;top:281.3px;font-size:7.4px;color:#b9b6b6;transform:scaleX(0.766);">Paste</div>
<svg class="a" style="left:111.5px;top:292.5px;" width="4" height="3" viewBox="0 0 4 3"><path d="M0 0h4L2 3z" fill="#c8c6c6"/></svg>
<svg class="a" style="left:127.5px;top:263.0px;" width="6" height="8" viewBox="0 0 6 8"><path d="M1 .5l4 5M5 .5l-4 5" stroke="#c8c6c6" stroke-width=".9"/><circle cx="1.3" cy="6.5" r="1.1" fill="none" stroke="#c8c6c6" stroke-width=".7"/><circle cx="4.7" cy="6.5" r="1.1" fill="none" stroke="#c8c6c6" stroke-width=".7"/></svg>
<svg class="a" style="left:125.0px;top:274.0px;" width="14" height="10" viewBox="0 0 14 10"><rect x=".5" y=".5" width="6" height="7" fill="none" stroke="#c8c6c6" stroke-width=".9"/><rect x="3" y="2.5" width="6" height="7" fill="#f5f1f1" stroke="#c8c6c6" stroke-width=".9"/><path d="M11 4l1.2 1.2L13.4 4" fill="none" stroke="#c8c6c6" stroke-width=".7"/></svg>
<svg class="a" style="left:126.0px;top:288.0px;" width="9" height="9" viewBox="0 0 9 9"><path d="M1 8l3-3M4 5l2-2 2 2-2 2zM6 3l2-2.5" fill="none" stroke="#c8c6c6" stroke-width="1"/></svg>
<svg class="a" style="left:156.5px;top:261.5px;" width="18" height="16" viewBox="0 0 18 16"><rect x="1" y="4" width="16" height="11" fill="#fff" stroke="#777" stroke-width="1.1"/><path d="M1 8h16M9 8v7" stroke="#777" stroke-width="1"/><path d="M3.5 .5v6M.5 3.5h6" stroke="#3a9b4a" stroke-width="1.2"/></svg>
<div class="s" style="left:157.0px;top:283.7px;font-size:7.6px;color:#444;transform:scaleX(0.921);">New</div>
<div class="s" style="left:155.0px;top:292.0px;font-size:7.6px;color:#444;transform:scaleX(0.917);">Slide</div>
<svg class="a" style="left:172.0px;top:295.0px;" width="4" height="3" viewBox="0 0 4 3"><path d="M0 0h4L2 3z" fill="#666"/></svg>
<svg class="a" style="left:180.5px;top:262.0px;" width="18" height="17" viewBox="0 0 18 17"><rect x=".5" y=".5" width="14" height="11" fill="#fff" stroke="#888" stroke-width="1"/><rect x="2.5" y="2.5" width="13" height="10" fill="#fff" stroke="#777" stroke-width="1"/><circle cx="10" cy="9" r="3.2" fill="none" stroke="#3b83c8" stroke-width="1.1"/><path d="M12.3 11.3l3.5 3.8" stroke="#3b83c8" stroke-width="1.3"/></svg>
<div class="s" style="left:180.5px;top:281.2px;font-size:7.6px;color:#444;transform:scaleX(0.788);">Reuse</div>
<div class="s" style="left:180.8px;top:290.2px;font-size:7.6px;color:#444;transform:scaleX(0.812);">Slides</div>
<svg class="a" style="left:202.3px;top:262.5px;" width="9" height="8" viewBox="0 0 9 8"><rect x=".5" y=".5" width="8" height="7" fill="#fff" stroke="#777" stroke-width="1"/><path d="M.5 2.8h8M4.5 2.8v4.7" stroke="#777" stroke-width=".8"/></svg>
<div class="s" style="left:212.7px;top:263.2px;font-size:7.6px;color:#444;transform:scaleX(0.898);">Layout</div>
<svg class="a" style="left:235.0px;top:266.0px;" width="4" height="3" viewBox="0 0 4 3"><path d="M0 0h4L2 3z" fill="#666"/></svg>
<svg class="a" style="left:202.3px;top:275.5px;" width="9" height="8" viewBox="0 0 9 8"><rect x=".5" y=".5" width="8" height="7" fill="#fff" stroke="#777" stroke-width="1"/><path d="M2 3.5a2 2 0 1 1 1 2M1 2l1 1.5L3.3 2.5" fill="none" stroke="#3b83c8" stroke-width=".8"/></svg>
<div class="s" style="left:212.7px;top:276.2px;font-size:7.6px;color:#444;transform:scaleX(0.831);">Reset</div>
<svg class="a" style="left:202.3px;top:289.0px;" width="9" height="9" viewBox="0 0 9 9"><rect x=".5" y="1" width="8" height="7.5" fill="#fff" stroke="#777" stroke-width="1"/><rect x=".5" y=".5" width="8" height="2" fill="#6bb37a"/></svg>
<div class="s" style="left:212.7px;top:289.9px;font-size:7.6px;color:#444;transform:scaleX(0.840);">Section</div>
<svg class="a" style="left:237.5px;top:292.7px;" width="4" height="3" viewBox="0 0 4 3"><path d="M0 0h4L2 3z" fill="#666"/></svg>
<div class="a" style="left:253.5px;top:264.7px;width:84.2px;height:12.3px;background:#e7e3e3;border:1px solid #dcd8d8"></div>
<svg class="a" style="left:332.0px;top:270.0px;" width="4" height="3" viewBox="0 0 4 3"><path d="M0 0h4L2 3z" fill="#bbb"/></svg>
<div class="a" style="left:339.0px;top:264.7px;width:25.3px;height:12.3px;background:#e7e3e3;border:1px solid #dcd8d8"></div>
<svg class="a" style="left:359.0px;top:270.0px;" width="4" height="3" viewBox="0 0 4 3"><path d="M0 0h4L2 3z" fill="#bbb"/></svg>
<div class="s" style="left:367.7px;top:266.2px;font-size:9px;color:#b0adad;transform:scaleX(1.083);">A</div>
<div class="s" style="left:374.0px;top:265.0px;font-size:5px;color:#b0adad;transform:scaleX(1.279);">^</div>
<div class="s" style="left:381.8px;top:267.8px;font-size:7.5px;color:#b0adad;transform:scaleX(1.099);">A</div>
<div class="a" style="left:393.5px;top:265.0px;width:0.7px;height:12.0px;background:#ddd"></div>
<div class="s" style="left:397.7px;top:266.2px;font-size:9px;color:#b0adad;transform:scaleX(1.083);">A</div>
<svg class="a" style="left:402.0px;top:271.0px;" width="5" height="5" viewBox="0 0 5 5"><path d="M.5 3.5l2-2.8L4.5 2 2.5 4.5z" fill="none" stroke="#c8a0a0" stroke-width=".8"/></svg>
<div class="s" style="left:256.5px;top:284.1px;font-size:8.5px;color:#b5b2b2;transform:scaleX(0.970);font-weight:bold;">B</div>
<div class="s" style="left:271.0px;top:284.1px;font-size:8.5px;color:#b5b2b2;transform:scaleX(1.482);font-style:italic;">I</div>
<div class="s" style="left:283.0px;top:284.1px;font-size:8.5px;color:#b5b2b2;transform:scaleX(0.733);text-decoration:underline;">U</div>
<div class="s" style="left:296.0px;top:284.1px;font-size:8.5px;color:#b5b2b2;transform:scaleX(0.882);">S</div>
<div class="s" style="left:308.0px;top:284.1px;font-size:8.5px;color:#b5b2b2;transform:scaleX(0.899);text-decoration:line-through;">ab</div>
<div class="s" style="left:321.0px;top:284.1px;font-size:8.5px;color:#b5b2b2;transform:scaleX(0.934);">AV</div>
<div class="s" style="left:343.0px;top:284.1px;font-size:8.5px;color:#b5b2b2;transform:scaleX(0.962);">Aa</div>
<svg class="a" style="left:334.0px;top:287.5px;" width="4" height="3" viewBox="0 0 4 3"><path d="M0 0h4L2 3z" fill="#c5c2c2"/></svg>
<svg class="a" style="left:356.0px;top:287.5px;" width="4" height="3" viewBox="0 0 4 3"><path d="M0 0h4L2 3z" fill="#c5c2c2"/></svg>
<svg class="a" style="left:382.0px;top:287.5px;" width="4" height="3" viewBox="0 0 4 3"><path d="M0 0h4L2 3z" fill="#c5c2c2"/></svg>
<svg class="a" style="left:403.0px;top:287.5px;" width="4" height="3" viewBox="0 0 4 3"><path d="M0 0h4L2 3z" fill="#c5c2c2"/></svg>
<div class="a" style="left:363.5px;top:283.0px;width:0.7px;height:12.0px;background:#ddd"></div>
<svg class="a" style="left:367.0px;top:282.5px;" width="10" height="11" viewBox="0 0 10 11"><path d="M2 7l5-5.5 1.8 1.8L3.8 8.5z" fill="none" stroke="#b0adad" stroke-width=".9"/><rect x="0" y="9" width="10" height="1.6" fill="#b5b2b2"/></svg>
<svg class="a" style="left:389.0px;top:281.5px;" width="10" height="12" viewBox="0 0 10 12"><path d="M1.5 8L5 .8 8.5 8M2.8 5.5h4.4" fill="none" stroke="#b0adad" stroke-width="1"/><rect x="0" y="9.5" width="10" height="1.8" fill="#b5b2b2"/></svg>
<div class="a" style="left:418.5px;top:267.0px;width:1.2px;height:1.2px;background:#c5c2c2"></div><div class="a" style="left:421.0px;top:267.0px;width:5.8px;height:0.9px;background:#c5c2c2"></div><div class="a" style="left:418.5px;top:270.0px;width:1.2px;height:1.2px;background:#c5c2c2"></div><div class="a" style="left:421.0px;top:270.0px;width:5.8px;height:0.9px;background:#c5c2c2"></div><div class="a" style="left:418.5px;top:273.0px;width:1.2px;height:1.2px;background:#c5c2c2"></div><div class="a" style="left:421.0px;top:273.0px;width:5.8px;height:0.9px;background:#c5c2c2"></div>
<svg class="a" style="left:432.0px;top:270.0px;" width="4" height="3" viewBox="0 0 4 3"><path d="M0 0h4L2 3z" fill="#c5c2c2"/></svg>
<div class="a" style="left:440.0px;top:267.0px;width:1.2px;height:1.2px;background:#c5c2c2"></div><div class="a" style="left:442.5px;top:267.0px;width:6.5px;height:0.9px;background:#c5c2c2"></div><div class="a" style="left:440.0px;top:270.0px;width:1.2px;height:1.2px;background:#c5c2c2"></div><div class="a" style="left:442.5px;top:270.0px;width:6.5px;height:0.9px;background:#c5c2c2"></div><div class="a" style="left:440.0px;top:273.0px;width:1.2px;height:1.2px;background:#c5c2c2"></div><div class="a" style="left:442.5px;top:273.0px;width:6.5px;height:0.9px;background:#c5c2c2"></div>
<svg class="a" style="left:454.0px;top:270.0px;" width="4" height="3" viewBox="0 0 4 3"><path d="M0 0h4L2 3z" fill="#c5c2c2"/></svg>
<div class="a" style="left:463.0px;top:267.0px;width:7.5px;height:0.9px;background:#c5c2c2"></div><div class="a" style="left:463.0px;top:270.0px;width:7.5px;height:0.9px;background:#c5c2c2"></div><div class="a" style="left:463.0px;top:273.0px;width:7.5px;height:0.9px;background:#c5c2c2"></div>
<div class="a" style="left:476.0px;top:267.0px;width:8.0px;height:0.9px;background:#c5c2c2"></div><div class="a" style="left:476.0px;top:270.0px;width:8.0px;height:0.9px;background:#c5c2c2"></div><div class="a" style="left:476.0px;top:273.0px;width:8.0px;height:0.9px;background:#c5c2c2"></div>
<div class="a" style="left:489.0px;top:267.0px;width:1.2px;height:1.2px;background:#c5c2c2"></div><div class="a" style="left:491.5px;top:267.0px;width:5.5px;height:0.9px;background:#c5c2c2"></div><div class="a" style="left:489.0px;top:270.0px;width:1.2px;height:1.2px;background:#c5c2c2"></div><div class="a" style="left:491.5px;top:270.0px;width:5.5px;height:0.9px;background:#c5c2c2"></div><div class="a" style="left:489.0px;top:273.0px;width:1.2px;height:1.2px;background:#c5c2c2"></div><div class="a" style="left:491.5px;top:273.0px;width:5.5px;height:0.9px;background:#c5c2c2"></div>
<svg class="a" style="left:501.5px;top:270.0px;" width="4" height="3" viewBox="0 0 4 3"><path d="M0 0h4L2 3z" fill="#c5c2c2"/></svg>
<div class="a" style="left:419.0px;top:284.0px;width:8.0px;height:0.9px;background:#c5c2c2"></div><div class="a" style="left:419.0px;top:286.3px;width:8.0px;height:0.9px;background:#c5c2c2"></div><div class="a" style="left:419.0px;top:288.6px;width:8.0px;height:0.9px;background:#c5c2c2"></div><div class="a" style="left:419.0px;top:290.9px;width:8.0px;height:0.9px;background:#c5c2c2"></div>
<div class="a" style="left:432.0px;top:284.0px;width:8.0px;height:0.9px;background:#c5c2c2"></div><div class="a" style="left:432.0px;top:286.3px;width:8.0px;height:0.9px;background:#c5c2c2"></div><div class="a" style="left:432.0px;top:288.6px;width:8.0px;height:0.9px;background:#c5c2c2"></div><div class="a" style="left:432.0px;top:290.9px;width:8.0px;height:0.9px;background:#c5c2c2"></div>
<div class="a" style="left:446.0px;top:284.0px;width:8.0px;height:0.9px;background:#c5c2c2"></div><div class="a" style="left:446.0px;top:286.3px;width:8.0px;height:0.9px;background:#c5c2c2"></div><div class="a" style="left:446.0px;top:288.6px;width:8.0px;height:0.9px;background:#c5c2c2"></div><div class="a" style="left:446.0px;top:290.9px;width:8.0px;height:0.9px;background:#c5c2c2"></div>
<div class="a" style="left:459.0px;top:284.0px;width:8.0px;height:0.9px;background:#c5c2c2"></div><div class="a" style="left:459.0px;top:286.3px;width:8.0px;height:0.9px;background:#c5c2c2"></div><div class="a" style="left:459.0px;top:288.6px;width:8.0px;height:0.9px;background:#c5c2c2"></div><div class="a" style="left:459.0px;top:290.9px;width:8.0px;height:0.9px;background:#c5c2c2"></div>
<div class="a" style="left:471.5px;top:282.0px;width:0.7px;height:12.0px;background:#ddd"></div>
<div class="a" style="left:476.0px;top:285.5px;width:8.0px;height:0.9px;background:#c5c2c2"></div><div class="a" style="left:476.0px;top:288.5px;width:8.0px;height:0.9px;background:#c5c2c2"></div>
<svg class="a" style="left:488.0px;top:287.0px;" width="4" height="3" viewBox="0 0 4 3"><path d="M0 0h4L2 3z" fill="#c5c2c2"/></svg>
<svg class="a" style="left:509.0px;top:262.0px;" width="9" height="9" viewBox="0 0 9 9"><path d="M2 .5v7M.5 6l1.5 1.8L3.5 6M6 .5v7M4.5 2L6 .3 7.5 2" fill="none" stroke="#b0adad" stroke-width=".8"/></svg>
<svg class="a" style="left:509.0px;top:276.0px;" width="10" height="8" viewBox="0 0 10 8"><rect x=".5" y="1" width="8" height="6" fill="none" stroke="#c5c2c2" stroke-width=".8"/><path d="M2.5 4h4" stroke="#c5c2c2" stroke-width=".8"/></svg>
<svg class="a" style="left:510.0px;top:289.0px;" width="10" height="8" viewBox="0 0 10 8"><rect x=".5" y=".5" width="6" height="4" fill="none" stroke="#b5b2b2" stroke-width=".8"/><rect x="3.5" y="3.5" width="6" height="4" fill="#f5f1f1" stroke="#b5b2b2" stroke-width=".8"/></svg>
<svg class="a" style="left:520.5px;top:266.0px;" width="4" height="3" viewBox="0 0 4 3"><path d="M0 0h4L2 3z" fill="#c5c2c2"/></svg>
<svg class="a" style="left:520.5px;top:279.5px;" width="4" height="3" viewBox="0 0 4 3"><path d="M0 0h4L2 3z" fill="#c5c2c2"/></svg>
<svg class="a" style="left:520.5px;top:292.5px;" width="4" height="3" viewBox="0 0 4 3"><path d="M0 0h4L2 3z" fill="#c5c2c2"/></svg>
<svg class="a" style="left:540.0px;top:261.5px;" width="17" height="17" viewBox="0 0 17 17"><rect x=".5" y=".5" width="10" height="10" fill="#5da0e6" stroke="#3b7bc0" stroke-width=".8"/><circle cx="11" cy="11" r="5.3" fill="#fff" stroke="#555" stroke-width="1"/></svg>
<div class="s" style="left:538.0px;top:281.2px;font-size:7.6px;color:#444;transform:scaleX(0.776);">Shapes</div>
<svg class="a" style="left:546.5px;top:292.5px;" width="4" height="3" viewBox="0 0 4 3"><path d="M0 0h4L2 3z" fill="#555"/></svg>
<svg class="a" style="left:564.5px;top:261.5px;" width="17" height="17" viewBox="0 0 17 17"><rect x="4" y="4" width="9" height="9" fill="#f6c05a"/><rect x=".5" y=".5" width="6" height="6" fill="#fff" stroke="#555" stroke-width="1"/><rect x="10" y="10" width="6" height="6" fill="#fff" stroke="#555" stroke-width="1"/></svg>
<div class="s" style="left:562.0px;top:281.2px;font-size:7.6px;color:#444;transform:scaleX(0.832);">Arrange</div>
<svg class="a" style="left:571.0px;top:292.5px;" width="4" height="3" viewBox="0 0 4 3"><path d="M0 0h4L2 3z" fill="#555"/></svg>
<svg class="a" style="left:590.5px;top:262.0px;" width="16" height="16" viewBox="0 0 16 16"><rect x=".5" y=".5" width="15" height="15" fill="none" stroke="#c8c6c6" stroke-width="1"/><path d="M5 13l8-8 1.5 1.5-8 8z" fill="none" stroke="#c8c6c6" stroke-width=".8"/></svg>
<div class="s" style="left:591.0px;top:281.2px;font-size:7.6px;color:#b9b6b6;transform:scaleX(0.824);">Quick</div>
<div class="s" style="left:589.0px;top:290.2px;font-size:7.6px;color:#b9b6b6;transform:scaleX(0.797);">Styles</div>
<svg class="a" style="left:606.0px;top:293.0px;" width="4" height="3" viewBox="0 0 4 3"><path d="M0 0h4L2 3z" fill="#c8c6c6"/></svg>
<svg class="a" style="left:613.5px;top:261.5px;" width="9" height="9" viewBox="0 0 9 9"><path d="M2 5l3-4 3 4-3 2z" fill="none" stroke="#b0adad" stroke-width=".9"/><rect x="0" y="7" width="9" height="1.6" fill="#b5b2b2"/></svg>
<svg class="a" style="left:613.5px;top:274.5px;" width="9" height="9" viewBox="0 0 9 9"><rect x=".5" y=".5" width="8" height="6" fill="none" stroke="#b5b2b2" stroke-width=".9"/><rect x="0" y="7.3" width="9" height="1.6" fill="#b5b2b2"/></svg>
<svg class="a" style="left:613.5px;top:287.5px;" width="9" height="8" viewBox="0 0 9 8"><ellipse cx="4.5" cy="4" rx="4" ry="3" fill="none" stroke="#b5b2b2" stroke-width=".9"/></svg>
<svg class="a" style="left:626.0px;top:265.5px;" width="4" height="3" viewBox="0 0 4 3"><path d="M0 0h4L2 3z" fill="#c8c6c6"/></svg>
<svg class="a" style="left:626.0px;top:278.5px;" width="4" height="3" viewBox="0 0 4 3"><path d="M0 0h4L2 3z" fill="#c8c6c6"/></svg>
<svg class="a" style="left:626.0px;top:291.0px;" width="4" height="3" viewBox="0 0 4 3"><path d="M0 0h4L2 3z" fill="#c8c6c6"/></svg>
<svg class="a" style="left:643.5px;top:262.0px;" width="10" height="9" viewBox="0 0 10 9"><circle cx="6" cy="3.5" r="3" fill="none" stroke="#555" stroke-width="1"/><path d="M4 5.5L.7 8.5" stroke="#555" stroke-width="1.1"/></svg>
<div class="s" style="left:654.0px;top:262.7px;font-size:7.6px;color:#444;transform:scaleX(0.879);">Find</div>
<svg class="a" style="left:643.0px;top:274.5px;" width="11" height="10" viewBox="0 0 11 10"><text x="3" y="5" font-size="5" fill="#9a6fc0" font-family="Liberation Sans">b</text><text x="5.5" y="9.5" font-size="5" fill="#3b83c8" font-family="Liberation Sans">c</text><path d="M1.5 3a3 3 0 0 0 0 5" fill="none" stroke="#3b83c8" stroke-width=".8"/></svg>
<div class="s" style="left:654.0px;top:275.7px;font-size:7.6px;color:#444;transform:scaleX(0.825);">Replace</div>
<svg class="a" style="left:682.5px;top:278.5px;" width="4" height="3" viewBox="0 0 4 3"><path d="M0 0h4L2 3z" fill="#555"/></svg>
<svg class="a" style="left:644.0px;top:288.0px;" width="7" height="9" viewBox="0 0 7 9"><path d="M.6.6L6 5.5 3.5 5.7 5 8.5 4 8.9 2.6 6.1.6 7.6z" fill="none" stroke="#555" stroke-width=".8"/></svg>
<div class="s" style="left:654.0px;top:288.7px;font-size:7.6px;color:#444;transform:scaleX(0.805);">Select</div>
<svg class="a" style="left:673.0px;top:291.5px;" width="4" height="3" viewBox="0 0 4 3"><path d="M0 0h4L2 3z" fill="#555"/></svg>
<svg class="a" style="left:703.5px;top:261.5px;" width="12" height="17" viewBox="0 0 12 17"><rect x="3" y=".5" width="6" height="11" rx="3" fill="#5ea2ea" stroke="#3f7fc4" stroke-width=".7"/><path d="M1 8a5 5 0 0 0 10 0M6 13v3.5" fill="none" stroke="#666" stroke-width="1"/></svg>
<div class="s" style="left:699.7px;top:281.2px;font-size:7.6px;color:#444;transform:scaleX(0.858);">Dictate</div>
<svg class="a" style="left:707.5px;top:292.5px;" width="4" height="3" viewBox="0 0 4 3"><path d="M0 0h4L2 3z" fill="#555"/></svg>
<svg class="a" style="left:740.0px;top:262.0px;" width="17" height="17" viewBox="0 0 17 17"><path d="M1 3h9l3 3v10H1z" fill="#fff" stroke="#3b83c8" stroke-width="1"/><path d="M4 11l7-6 2.5 2.5-7 6z" fill="#5ea2ea"/><path d="M10 .8l5.5 5.5" stroke="#3b83c8" stroke-width="1.2"/></svg>
<div class="s" style="left:731.7px;top:281.2px;font-size:7.6px;color:#444;transform:scaleX(0.848);">Sensitivity</div>
<svg class="a" style="left:744.0px;top:292.5px;" width="4" height="3" viewBox="0 0 4 3"><path d="M0 0h4L2 3z" fill="#555"/></svg>
<svg class="a" style="left:773.0px;top:261.5px;" width="19" height="16" viewBox="0 0 19 16"><rect x="4" y="3.5" width="14" height="12" fill="#fff" stroke="#777" stroke-width="1.1"/><path d="M4 7h14M13 7v8.5" stroke="#777" stroke-width="1"/><path d="M5 .5L1 7h3l-2 5 5-7H4z" fill="#f2b33a"/></svg>
<div class="s" style="left:773.0px;top:281.2px;font-size:7.6px;color:#444;transform:scaleX(0.845);">Design</div>
<div class="s" style="left:775.5px;top:290.2px;font-size:7.6px;color:#444;transform:scaleX(0.834);">Ideas</div>
<div class="a" style="left:96.0px;top:314.5px;width:120.0px;height:306.5px;background:#e9e8e8"></div>
<div class="a" style="left:215.2px;top:314.5px;width:0.8px;height:306.5px;background:#d8d6d6"></div>
<div class="a" style="left:216.0px;top:314.5px;width:639.0px;height:286.5px;background:#e6e6e8"></div>
<div class="a" style="left:205.4px;top:313.2px;width:8.0px;height:304.5px;background:#dcdada"></div>
<div class="a" style="left:205.4px;top:313.2px;width:8.0px;height:8.0px;background:#fff;border:1px solid #d0d0d0"></div>
<svg class="a" style="left:207.4px;top:315.6px;" width="4" height="3" viewBox="0 0 4 3"><path d="M0 3h4L2 0z" fill="#444"/></svg>
<div class="a" style="left:205.4px;top:321.5px;width:8.0px;height:66.0px;background:#fff;border:1px solid #d3d1d1"></div>
<div class="a" style="left:205.4px;top:609.0px;width:8.0px;height:8.0px;background:#fff;border:1px solid #d0d0d0"></div>
<svg class="a" style="left:207.4px;top:611.5px;" width="4" height="3" viewBox="0 0 4 3"><path d="M0 0h4L2 3z" fill="#444"/></svg>
<div class="a" style="left:845.7px;top:316.0px;width:7.3px;height:285.0px;background:#dcdcdc"></div>
<div class="a" style="left:845.7px;top:313.8px;width:7.3px;height:7.0px;background:#fff;border:1px solid #d0d0d0"></div>
<svg class="a" style="left:847.3px;top:315.8px;" width="4" height="3" viewBox="0 0 4 3"><path d="M0 3h4L2 0z" fill="#444"/></svg>
<div class="a" style="left:845.7px;top:321.0px;width:7.3px;height:10.0px;background:#fff;border:1px solid #d6d6d6"></div>
<div class="a" style="left:845.7px;top:566.0px;width:7.3px;height:7.0px;background:#fff;border:1px solid #d0d0d0"></div>
<svg class="a" style="left:847.3px;top:568.0px;" width="4" height="3" viewBox="0 0 4 3"><path d="M0 0h4L2 3z" fill="#444"/></svg>
<svg class="a" style="left:847.0px;top:577.0px;" width="5" height="6" viewBox="0 0 5 6"><path d="M0 3h5L2.5 0zM0 6h5L2.5 3z" fill="#555"/></svg>
<svg class="a" style="left:847.0px;top:586.0px;" width="5" height="6" viewBox="0 0 5 6"><path d="M0 0h5L2.5 3zM0 3h5L2.5 6z" fill="#555"/></svg>
<svg class="a" style="left:287px;top:319px" width="489" height="275" viewBox="0 0 489 275">
<defs><radialGradient id="cw" cx="0.42" cy="0.45" r="0.62">
<stop offset="0" stop-color="#f6eef0"/><stop offset="0.35" stop-color="#f1e4ee" stop-opacity="0.9"/><stop offset="1" stop-color="#f1e4ee" stop-opacity="0"/></radialGradient>
<linearGradient id="cbase" x1="0" y1="0" x2="1" y2="1"><stop offset="0" stop-color="#9c8ad6"/><stop offset="0.5" stop-color="#e8c8d8"/><stop offset="1" stop-color="#f5c060"/></linearGradient>
<radialGradient id="corange" cx="0.95" cy="0.4" r="0.5"><stop offset="0" stop-color="#f7944a"/><stop offset="1" stop-color="#f7944a" stop-opacity="0"/></radialGradient>
<radialGradient id="cpink" cx="0.65" cy="0.05" r="0.45"><stop offset="0" stop-color="#c8679c"/><stop offset="1" stop-color="#c8679c" stop-opacity="0"/></radialGradient>
<radialGradient id="cyellow" cx="0.6" cy="0.85" r="0.45"><stop offset="0" stop-color="#f2c45a"/><stop offset="1" stop-color="#f2c45a" stop-opacity="0"/></radialGradient>
<radialGradient id="cblue" cx="0.15" cy="0.8" r="0.45"><stop offset="0" stop-color="#7c9fe6"/><stop offset="1" stop-color="#7c9fe6" stop-opacity="0"/></radialGradient>
<radialGradient id="cviolet" cx="0.08" cy="0.3" r="0.45"><stop offset="0" stop-color="#8a7ed2"/><stop offset="1" stop-color="#8a7ed2" stop-opacity="0"/></radialGradient></defs>
<rect width="489" height="275" fill="#f4efea"/>
<circle cx="54.7" cy="-4" r="27" fill="#fdfcfb"/>
<g fill="none" stroke="#b3accb" stroke-width="0.6" stroke-dasharray="1.8 1.5"><path d="M33.7 -0.2C33.9 1.3 33.3 6.3 34.8 9.0C36.4 11.7 39.5 13.5 43.0 16.0C46.5 18.5 53.3 21.7 55.6 24.0C57.9 26.3 57.3 27.7 56.7 29.8C56.1 31.9 55.3 35.2 52.0 36.7C48.7 38.2 40.4 36.7 37.0 39.0C33.6 41.3 33.4 46.0 31.4 50.5C29.4 55.0 28.1 60.9 25.0 66.0C21.9 71.1 17.0 76.8 13.0 81.0C9.0 85.2 3.0 89.3 1.0 91.0"/><path d="M46.4 -0.2C49.3 3.3 60.5 16.4 63.6 20.6C66.7 24.8 65.2 22.3 64.8 25.0C64.4 27.7 63.9 33.2 61.0 36.7C58.1 40.2 51.5 41.9 47.5 46.0C43.5 50.1 41.1 55.5 37.0 61.0C32.9 66.5 27.7 73.2 23.0 79.0C18.3 84.8 12.8 91.5 9.0 96.0C5.2 100.5 1.5 104.3 0.0 106.0"/><path d="M70.6 -0.2C72.3 3.3 80.3 14.2 81.0 20.6C81.7 27.0 77.9 33.0 75.0 38.0C72.1 43.0 68.6 45.9 63.6 50.5C58.6 55.1 51.9 58.6 45.2 65.3C38.5 72.0 29.5 82.6 23.2 90.5C16.9 98.4 11.3 107.4 7.4 112.5C3.5 117.6 1.2 119.6 0.0 121.0"/><path d="M84.4 -0.2C85.2 3.3 89.0 14.2 89.0 20.6C89.0 27.0 85.9 31.6 84.4 38.0C82.9 44.4 83.8 51.3 79.9 59.0C76.0 66.7 68.3 75.6 61.0 84.0C53.7 92.4 44.2 102.0 35.8 109.4C27.4 116.8 16.6 123.9 10.6 128.3C4.6 132.7 1.8 134.7 0.0 136.0"/><path d="M0.3 20.6C2.2 21.2 8.5 21.7 11.8 24.0C15.1 26.3 18.5 29.9 19.9 34.4C21.3 38.9 20.5 45.3 20.0 51.0C19.5 56.7 19.1 61.8 17.0 68.4C14.9 75.0 10.2 85.4 7.4 90.5C4.6 95.6 1.2 97.6 0.0 99.0"/><path d="M0.3 26.3C2.0 27.1 8.1 28.1 10.6 31.0C13.1 33.9 14.5 38.6 15.3 43.6C16.1 48.6 15.9 55.8 15.3 61.0C14.8 66.2 14.1 70.0 12.0 74.7C9.9 79.4 4.5 86.6 3.0 89.0"/><path d="M0.3 35.5C1.5 36.5 5.7 37.9 7.2 41.3C8.6 44.7 9.0 51.1 9.0 56.0C9.0 60.9 8.5 66.8 7.0 71.0C5.5 75.2 1.2 79.3 0.0 81.0"/></g>
<g fill="none" stroke="#c2bccf" stroke-width="0.7" stroke-dasharray="2 1.6">
<path d="M350 275C370 260 390 248 420 242 450 236 470 220 480 200 486 188 489 175"/>
<path d="M365 275C385 262 405 254 432 249 458 244 476 228 484 212 487 205 489 198"/>
<path d="M335 275C355 255 375 240 405 232 440 224 462 205 474 185 482 170 488 160"/>
<path d="M318 275C340 250 365 232 395 224 430 214 455 195 466 170 474 152 484 140 489 130"/>
<path d="M420 275C445 265 470 255 489 240"/>
</g>
<path d="M320.4 274C330 268 340 264 350 262.4 370 259 390 257 405 255 425 252 445 248 457 244 463 240 467 236 470 233 478 224 484 215 489 208" fill="none" stroke="#e9834a" stroke-width="1.3"/>
<circle cx="447.5" cy="279" r="29.5" fill="#fdfcfb"/>
</svg>
<div class="a" style="left:547.4px;top:352.8px;width:206px;height:206px;border-radius:50%;overflow:hidden;isolation:isolate"><div class="a" style="left:-20px;top:-20px;width:246px;height:246px;background:conic-gradient(from 0deg,#c27fbb 0deg,#c8729e 35deg,#e08a74 62deg,#f49a58 88deg,#f5a657 118deg,#f3bd5e 150deg,#f2c864 182deg,#e9c673 196deg,#a9b6de 212deg,#80a0e4 228deg,#8a98de 252deg,#8f88d6 282deg,#a784c9 320deg,#c27fbb 360deg);filter:blur(10px)"></div><div class="a" style="left:0;top:0;width:206px;height:206px;background:radial-gradient(ellipse 47% 49% at 40% 47%,rgba(248,240,242,.97) 0%,rgba(248,240,242,.78) 40%,rgba(248,240,242,0) 100%)"></div></div>
<svg class="a" style="left:648.0px;top:453.0px;" width="6" height="6" viewBox="0 0 6 6"><path d="M3 0v6M0 3h6" stroke="#8078c0" stroke-width="0.8"/></svg>
<div class="s" style="left:331.2px;top:408.6px;font-size:27.5px;color:#27224d;transform:scaleX(1.025);letter-spacing:0;">IS Laboratorul</div>
<div class="s" style="left:331.2px;top:442.1px;font-size:27.5px;color:#27224d;transform:scaleX(1.000);">de bucurii SRL</div>
<svg class="a" style="left:362.0px;top:434.0px;" width="146" height="3" viewBox="0 0 146 3"><path d="M0 1.5q1.5-1.5 3 0t3 0q1.5-1.5 3 0t3 0q1.5-1.5 3 0t3 0q1.5-1.5 3 0t3 0q1.5-1.5 3 0t3 0q1.5-1.5 3 0t3 0q1.5-1.5 3 0t3 0q1.5-1.5 3 0t3 0q1.5-1.5 3 0t3 0q1.5-1.5 3 0t3 0q1.5-1.5 3 0t3 0q1.5-1.5 3 0t3 0q1.5-1.5 3 0t3 0q1.5-1.5 3 0t3 0q1.5-1.5 3 0t3 0q1.5-1.5 3 0t3 0q1.5-1.5 3 0t3 0q1.5-1.5 3 0t3 0q1.5-1.5 3 0t3 0q1.5-1.5 3 0t3 0q1.5-1.5 3 0t3 0q1.5-1.5 3 0t3 0q1.5-1.5 3 0t3 0q1.5-1.5 3 0t3 0q1.5-1.5 3 0t3 0" fill="none" stroke="#e25a5a" stroke-width=".6"/></svg>
<div class="s" style="left:331.2px;top:482.9px;font-size:6.3px;color:#4a4570;transform:scaleX(0.979);">TUTORE: conf. univ. dr. Cucui Gabriel</div>
<div class="s" style="left:331.2px;top:493.9px;font-size:6.3px;color:#4a4570;transform:scaleX(0.921);">STUDENȚI</div>
<div class="s" style="left:332.5px;top:506.2px;font-size:6.5px;color:#7b72c8;transform:scaleX(1.054);">+</div>
<div class="s" style="left:345.0px;top:506.4px;font-size:6.3px;color:#4a4570;transform:scaleX(1.003);">Căpraru Cosmin</div>
<div class="s" style="left:332.5px;top:517.8px;font-size:6.5px;color:#7b72c8;transform:scaleX(1.054);">+</div>
<div class="s" style="left:345.0px;top:517.9px;font-size:6.3px;color:#4a4570;transform:scaleX(1.003);">Manea Miruna Gabriela</div>
<div class="s" style="left:332.5px;top:529.4px;font-size:6.5px;color:#7b72c8;transform:scaleX(1.054);">+</div>
<div class="s" style="left:345.0px;top:529.5px;font-size:6.3px;color:#4a4570;transform:scaleX(0.986);">Manea Miruna Ioana</div>
<div class="s" style="left:332.5px;top:541.0px;font-size:6.5px;color:#7b72c8;transform:scaleX(1.054);">+</div>
<div class="s" style="left:345.0px;top:541.1px;font-size:6.3px;color:#4a4570;transform:scaleX(0.965);">Mihai Luiza Elena</div>
<div class="s" style="left:332.5px;top:552.5px;font-size:6.5px;color:#7b72c8;transform:scaleX(1.054);">+</div>
<div class="s" style="left:345.0px;top:552.6px;font-size:6.3px;color:#4a4570;transform:scaleX(0.960);">Stănescu Roxana Mădălina</div>
<svg class="a" style="left:345.0px;top:512.0px;" width="16" height="2" viewBox="0 0 16 2"><path d="M0 1q1-1 2 0t2 0 2 0 2 0 2 0 2 0 2 0 2 0" fill="none" stroke="#e25a5a" stroke-width=".5"/></svg>
<svg class="a" style="left:674.0px;top:401.0px;" width="12" height="16" viewBox="0 0 12 16"><path d="M5 .6l1.3 1.4L5 3.4 3.7 2zM1.4 3.9l1.4 1.4-1.4 1.4L0 5.3zM8.7 3.9l1.4 1.4-1.4 1.4-1.4-1.4z" fill="#2a2030"/><path d="M5 5.5v8.5l2-1.8 1.4 3 1.2-.6-1.4-2.9h2.6z" fill="#fff" stroke="#333" stroke-width=".7"/></svg>
<div class="a" style="left:114.0px;top:321.0px;width:81.2px;height:47.2px;border:2px solid #c5502a"></div><svg class="a" style="left:116.0px;top:323.0px;" width="77" height="44" viewBox="0 0 77 44"><defs><radialGradient id="t1cw" cx="0.42" cy="0.45" r="0.62">
<stop offset="0" stop-color="#f6eef0"/><stop offset="0.35" stop-color="#f1e4ee" stop-opacity="0.9"/><stop offset="1" stop-color="#f1e4ee" stop-opacity="0"/></radialGradient>
<linearGradient id="t1cbase" x1="0" y1="0" x2="1" y2="1"><stop offset="0" stop-color="#9c8ad6"/><stop offset="0.5" stop-color="#e8c8d8"/><stop offset="1" stop-color="#f5c060"/></linearGradient>
<radialGradient id="t1corange" cx="0.95" cy="0.4" r="0.5"><stop offset="0" stop-color="#f7944a"/><stop offset="1" stop-color="#f7944a" stop-opacity="0"/></radialGradient>
<radialGradient id="t1cpink" cx="0.65" cy="0.05" r="0.45"><stop offset="0" stop-color="#c8679c"/><stop offset="1" stop-color="#c8679c" stop-opacity="0"/></radialGradient>
<radialGradient id="t1cyellow" cx="0.6" cy="0.85" r="0.45"><stop offset="0" stop-color="#f2c45a"/><stop offset="1" stop-color="#f2c45a" stop-opacity="0"/></radialGradient>
<radialGradient id="t1cblue" cx="0.15" cy="0.8" r="0.45"><stop offset="0" stop-color="#7c9fe6"/><stop offset="1" stop-color="#7c9fe6" stop-opacity="0"/></radialGradient>
<radialGradient id="t1cviolet" cx="0.08" cy="0.3" r="0.45"><stop offset="0" stop-color="#8a7ed2"/><stop offset="1" stop-color="#8a7ed2" stop-opacity="0"/></radialGradient></defs><rect width="77" height="44" fill="#f2eee8"/><g transform="translate(0,0) scale(0.7)" fill="none" stroke="#b4acde" stroke-width="0.7" opacity="1"><path d="M0 5C8 2 14 8 12 16 10 24 2 26 0 34"/><path d="M0 12C6 10 9 14 8 20 7 26 2 28 0 30"/><path d="M4 0C14 4 20 10 18 20 16 30 8 34 6 44"/><path d="M12 0C22 6 26 14 24 24"/></g><g transform="translate(77,44) scale(-0.6)" fill="none" stroke="#b4acde" stroke-width="0.7" opacity="1"><path d="M0 5C8 2 14 8 12 16 10 24 2 26 0 34"/><path d="M0 12C6 10 9 14 8 20 7 26 2 28 0 30"/><path d="M4 0C14 4 20 10 18 20 16 30 8 34 6 44"/><path d="M12 0C22 6 26 14 24 24"/></g>

<text x="6.8" y="18.2" font-size="4.6" fill="#3e3870" font-family="Liberation Sans" textLength="28.2" lengthAdjust="spacingAndGlyphs">IS Laboratorul</text><text x="6.8" y="22.7" font-size="4.6" fill="#3e3870" font-family="Liberation Sans" textLength="29" lengthAdjust="spacingAndGlyphs">de bucurii SRL</text>
<path d="M7 25.3h16M7 27.5h7M9 30h9M9 32.3h11M9 34.6h9M9 37h11" stroke="#b0acc0" stroke-width=".55"/></svg>
<div class="a" style="left:157.2px;top:328.3px;width:32px;height:32px;border-radius:50%;overflow:hidden;isolation:isolate"><div class="a" style="left:-4px;top:-4px;width:40px;height:40px;background:conic-gradient(from 0deg,#c27fbb 0deg,#c8729e 35deg,#e08a74 62deg,#f49a58 88deg,#f5a657 118deg,#f3bd5e 150deg,#f2c864 182deg,#e9c673 196deg,#a9b6de 212deg,#80a0e4 228deg,#8a98de 252deg,#8f88d6 282deg,#a784c9 320deg,#c27fbb 360deg);filter:blur(1.8px)"></div><div class="a" style="left:0;top:0;width:32px;height:32px;background:radial-gradient(ellipse 47% 49% at 40% 47%,rgba(248,240,242,.97) 0%,rgba(248,240,242,.78) 40%,rgba(248,240,242,0) 100%)"></div></div>
<svg class="a" style="left:172.3px;top:343.4px;" width="2" height="2" viewBox="0 0 2 2"><path d="M1 0v2M0 1h2" stroke="#8078c0" stroke-width=".4"/></svg>
<svg class="a" style="left:116.0px;top:377.5px;" width="77" height="44" viewBox="0 0 77 44"><rect width="77" height="44" fill="#f2eee8"/><g transform="translate(0,0) scale(0.6)" fill="none" stroke="#b4acde" stroke-width="0.7" opacity="1"><path d="M0 5C8 2 14 8 12 16 10 24 2 26 0 34"/><path d="M0 12C6 10 9 14 8 20 7 26 2 28 0 30"/><path d="M4 0C14 4 20 10 18 20 16 30 8 34 6 44"/><path d="M12 0C22 6 26 14 24 24"/></g><rect x="38" y="0" width="39" height="44" fill="#f7d23a"/>
<circle cx="57" cy="19" r="5" fill="#efe6c8" opacity=".8"/><path d="M57 24v5M57 29q4 8 20 10" stroke="#333" stroke-width="1" fill="none"/>
<path d="M50.5 10.5l-3-2.2M54.5 8.5l-1-3.2M59.5 8.5l1-3.2M63.5 10.5l3-2.2M48.5 15h-3.5M65.5 15h3.5" stroke="#2a2a2a" stroke-width="1.1"/><rect x="55.5" y="23" width="3" height="5" fill="#8a8a8a"/>
<path d="M10 7.8h24M10 9.6h20M10 11.4h24M10 13.2h22M10 15h24M10 16.8h14M10 20h24M10 21.8h12M10 25h24M10 26.8h22M10 28.6h24M10 30.4h12" stroke="#b8b3c0" stroke-width=".55"/></svg>
<svg class="a" style="left:116.0px;top:432.5px;" width="77" height="44" viewBox="0 0 77 44"><rect width="77" height="44" fill="#f2eee8"/><g transform="translate(0,0) scale(0.8)" fill="none" stroke="#b4acde" stroke-width="0.7" opacity="1"><path d="M0 5C8 2 14 8 12 16 10 24 2 26 0 34"/><path d="M0 12C6 10 9 14 8 20 7 26 2 28 0 30"/><path d="M4 0C14 4 20 10 18 20 16 30 8 34 6 44"/><path d="M12 0C22 6 26 14 24 24"/></g><g transform="translate(77,44) scale(-0.7)" fill="none" stroke="#b4acde" stroke-width="0.7" opacity="1"><path d="M0 5C8 2 14 8 12 16 10 24 2 26 0 34"/><path d="M0 12C6 10 9 14 8 20 7 26 2 28 0 30"/><path d="M4 0C14 4 20 10 18 20 16 30 8 34 6 44"/><path d="M12 0C22 6 26 14 24 24"/></g>
<text x="8.5" y="7.6" font-size="3" font-weight="bold" fill="#4e4878" font-family="Liberation Sans" textLength="44" lengthAdjust="spacingAndGlyphs">DESCRIEREA PRODUSULUI /</text><text x="8.5" y="11.4" font-size="3" font-weight="bold" fill="#4e4878" font-family="Liberation Sans" textLength="20" lengthAdjust="spacingAndGlyphs">SERVICIULUI</text>
<path d="M28 14.5h41M28 16.3h14M28 19h40M28 20.8h18M28 23.5h41M28 25.3h38M28 27.1h10M28 30h40M28 31.8h36M28 34.5h41M28 36.3h36" stroke="#b4b0c0" stroke-width=".55"/></svg>
<svg class="a" style="left:116.0px;top:487.6px;" width="77" height="44" viewBox="0 0 77 44"><rect width="77" height="44" fill="#f2eee8"/>
<path d="M0 0h31C33 8 28 14 22 20 18 26 14 32 6 33 3 33 1 34 0 35z" fill="#d9d4ef"/>
<g fill="none" stroke="#a8a0dc" stroke-width=".5"><path d="M3 0C8 6 6 12 2 18"/><path d="M8 0C14 6 13 14 7 22 4 26 2 28 0 30"/><path d="M13 0C20 7 20 16 13 24 9 28 6 31 1 32"/><path d="M19 0C26 8 26 17 19 25"/><path d="M25 0C30 6 29 14 23 20"/><path d="M6 8C10 10 10 16 6 19"/><path d="M12 10C15 13 14 18 10 21"/></g>
<path d="M77 26C72 34 66 38 56 44h21z" fill="#ddd8f0"/>
<g fill="none" stroke="#a8a0dc" stroke-width=".5"><path d="M77 30C73 36 68 40 60 44"/><path d="M77 34C74 38 70 41 64 44"/><path d="M77 38C75 41 72 43 69 44"/></g>
<text x="26.1" y="23.3" font-size="4.3" fill="#5a5480" font-family="Liberation Sans" textLength="43.2" lengthAdjust="spacingAndGlyphs">Portofoliu de produse</text></svg>
<svg class="a" style="left:116.0px;top:542.8px;" width="77" height="44" viewBox="0 0 77 44"><rect width="77" height="44" fill="#f2eee8"/>
<path d="M0 0h18C20 6 16 12 10 16 6 19 3 22 0 24z" fill="#dcd7f0"/>
<g fill="none" stroke="#a8a0dc" stroke-width=".5"><path d="M4 0C9 5 8 10 3 15"/><path d="M10 0C15 5 14 11 8 17 5 20 2 21 0 22"/><path d="M15 0C18 5 17 9 13 13"/></g>
<rect x="38" y="0" width="39" height="44" fill="#141422"/>
<path d="M38 4h12l2 3v16H38z" fill="#4e3a34"/>
<ellipse cx="60" cy="36" rx="18" ry="5" fill="#e6e2ea"/>
<path d="M49 37l2-18 16-4 6 6 1 17q-12 3-25-1z" fill="#6e5248"/>
<path d="M51 19l16-4 6 6-14 3z" fill="#836258"/>
<circle cx="62" cy="14" r="2.6" fill="#c42a3c"/><circle cx="66" cy="17" r="2.3" fill="#d83a48"/><circle cx="59" cy="17" r="2" fill="#a82232"/>
<circle cx="47" cy="33" r="2.4" fill="#c8402a"/><circle cx="44" cy="35" r="2" fill="#b02838"/><circle cx="42" cy="6" r="2" fill="#9a2030"/><circle cx="46" cy="5" r="1.8" fill="#b02838"/>
<text x="9" y="8.5" font-size="3.4" fill="#5a5480" font-family="Liberation Sans" textLength="22" lengthAdjust="spacingAndGlyphs">Tortul Napoleon</text><text x="9" y="12.3" font-size="3.4" fill="#5a5480" font-family="Liberation Sans" textLength="14" lengthAdjust="spacingAndGlyphs">de ciocolată</text>
<path d="M9 16h26M9 17.8h24M9 19.6h26M9 21.4h22M9 23.2h26M9 25h20M9 26.8h24M9 28.6h16" stroke="#bdb8c4" stroke-width=".5"/></svg>
<svg class="a" style="left:116.0px;top:598.0px;" width="77" height="44" viewBox="0 0 77 44"><rect width="77" height="44" fill="#f2eee8"/>
<path d="M0 0h14C16 6 12 12 8 18 5 22 2 26 0 30z" fill="#dcd7f0"/>
<g fill="none" stroke="#a8a0dc" stroke-width=".5"><path d="M4 0C9 5 8 10 3 16"/><path d="M9 0C13 5 12 11 7 18 4 22 2 24 0 26"/></g>
<rect x="38" y="0" width="39" height="44" fill="#f3e6d6"/>
<path d="M38 2h14v26H38z" fill="#e86a50"/>
<path d="M38 4h13M38 8h13M38 12h13M38 16h13M38 20h13M38 24h13" stroke="#f08a70" stroke-width="1"/>
<ellipse cx="58" cy="3" rx="13" ry="4" fill="#c85060"/>
<ellipse cx="59" cy="13" rx="12" ry="4" fill="#b8c890"/><rect x="47" y="13" width="24" height="6" fill="#a8c080"/><ellipse cx="59" cy="19" rx="12" ry="4" fill="#9ab870"/>
<ellipse cx="58" cy="28" rx="13" ry="4" fill="#f2d888"/>
<rect x="71" y="0" width="6" height="30" fill="#e27a48"/>
<text x="9" y="7.8" font-size="3.3" fill="#5a5480" font-family="Liberation Sans" textLength="12" lengthAdjust="spacingAndGlyphs">French</text><text x="9" y="11.8" font-size="3.3" fill="#5a5480" font-family="Liberation Sans" textLength="16" lengthAdjust="spacingAndGlyphs">Macarons</text>
<path d="M9 16h24M9 17.8h24M9 19.6h24" stroke="#bdb8c4" stroke-width=".5"/></svg>
<div class="s" style="left:102.8px;top:321.2px;font-size:8.5px;color:#c5502a;transform:scaleX(1.058);">1</div>
<div class="s" style="left:102.8px;top:376.2px;font-size:8.5px;color:#444;transform:scaleX(1.058);">2</div>
<div class="s" style="left:102.8px;top:431.2px;font-size:8.5px;color:#444;transform:scaleX(1.058);">3</div>
<div class="s" style="left:102.8px;top:485.8px;font-size:8.5px;color:#444;transform:scaleX(1.058);">4</div>
<div class="s" style="left:102.8px;top:540.8px;font-size:8.5px;color:#444;transform:scaleX(1.058);">5</div>
<div class="s" style="left:102.8px;top:596.2px;font-size:8.5px;color:#444;transform:scaleX(1.058);">6</div>
<div class="a" style="left:216.0px;top:601.0px;width:639.0px;height:0.8px;background:#cfcfcf"></div>
<div class="a" style="left:216.0px;top:601.8px;width:639.0px;height:19.0px;background:#e8e7e7"></div>
<div class="s" style="left:222.7px;top:606.2px;font-size:9px;color:#7c7c7c;transform:scaleX(0.900);">Click to add notes</div>
<div class="a" style="left:96.0px;top:620.5px;width:759.0px;height:11.5px;background:#f3f0f0;border-top:1px solid #d9d9d9"></div>
<div class="s" style="left:101.0px;top:622.5px;font-size:8px;color:#6a6a6a;transform:scaleX(0.780);">Slide 1 of 24</div>
<div class="s" style="left:153.5px;top:622.5px;font-size:8px;color:#6a6a6a;transform:scaleX(0.785);">English (United States)</div>
<svg class="a" style="left:618.0px;top:621.5px;" width="10" height="10" viewBox="0 0 10 10"><path d="M0 4.5h10M0 6.8h10M0 9.1h10M3 3l2-2 2 2" fill="none" stroke="#888" stroke-width=".6"/></svg>
<div class="s" style="left:628.5px;top:622.5px;font-size:8px;color:#555;transform:scaleX(0.813);">Notes</div>
<div class="a" style="left:656.0px;top:621.0px;width:21.7px;height:11.0px;background:#dcdada"></div>
<svg class="a" style="left:661.0px;top:622.0px;" width="10" height="9" viewBox="0 0 10 9"><rect x=".5" y=".5" width="9" height="7" fill="none" stroke="#666" stroke-width=".9"/><rect x="2.5" y="2" width="5" height="3" fill="none" stroke="#666" stroke-width=".7"/></svg>
<svg class="a" style="left:685.0px;top:622.0px;" width="8" height="8" viewBox="0 0 8 8"><rect x=".5" y=".5" width="3" height="3" fill="none" stroke="#666" stroke-width=".8"/><rect x="4.5" y=".5" width="3" height="3" fill="none" stroke="#666" stroke-width=".8"/><rect x=".5" y="4.5" width="3" height="3" fill="none" stroke="#666" stroke-width=".8"/><rect x="4.5" y="4.5" width="3" height="3" fill="none" stroke="#666" stroke-width=".8"/></svg>
<svg class="a" style="left:707.0px;top:622.0px;" width="9" height="8" viewBox="0 0 9 8"><path d="M.5.8h3.5l.5.5.5-.5h3.5v6.5h-3.5l-.5.5-.5-.5H.5zM4.5 1.3v6" fill="none" stroke="#666" stroke-width=".8"/></svg>
<svg class="a" style="left:729.0px;top:621.5px;" width="9" height="10" viewBox="0 0 9 10"><rect x=".5" y=".5" width="8" height="5" fill="none" stroke="#666" stroke-width=".8"/><path d="M4.5 5.5v3M2.5 9h4" stroke="#666" stroke-width=".8"/></svg>
<div class="a" style="left:747.0px;top:626.0px;width:4.0px;height:0.9px;background:#666"></div>
<div class="a" style="left:755.0px;top:626.0px;width:55.0px;height:0.7px;background:#aaa"></div>
<div class="a" style="left:773.0px;top:623.0px;width:3.0px;height:6.0px;background:#666"></div>
<div class="a" style="left:813.5px;top:626.0px;width:4.0px;height:0.9px;background:#666"></div>
<div class="a" style="left:815.0px;top:624.0px;width:0.9px;height:4.0px;background:#666"></div>
<div class="s" style="left:824.0px;top:623.0px;font-size:7px;color:#555;transform:scaleX(0.857);">69%</div>
<svg class="a" style="left:846.0px;top:621.0px;" width="9" height="10" viewBox="0 0 9 10"><path d="M4.5.5v9M.5 5h8M2.8 2.2L4.5.5l1.7 1.7M2.8 7.8l1.7 1.7 1.7-1.7M2 3.3L.5 5 2 6.7M7 3.3L8.5 5 7 6.7" fill="none" stroke="#777" stroke-width=".8"/></svg>
<div class="a" style="left:96.0px;top:632.0px;width:759.0px;height:16.5px;background:#4a2336"></div>
<svg class="a" style="left:101.8px;top:635.5px;" width="9.5" height="9.5" viewBox="0 0 9.5 9.5"><path d="M0 1.2L4.2.6v4H0zM5 .5L9.5 0v4.6H5zM0 5.2h4.2v4L0 8.6zM5 5.2h4.5v4.8L5 9.4z" fill="#fff"/></svg>
<svg class="a" style="left:121.8px;top:635.0px;" width="9.5" height="10" viewBox="0 0 9.5 10"><circle cx="6" cy="3.5" r="3" fill="none" stroke="#fff" stroke-width="1"/><path d="M4 5.8L.6 9.3" stroke="#fff" stroke-width="1.1"/></svg>
<svg class="a" style="left:141.8px;top:635.5px;" width="9.5" height="9.5" viewBox="0 0 9.5 9.5"><circle cx="4.75" cy="4.75" r="4" fill="none" stroke="#fff" stroke-width="1.1"/></svg>
<svg class="a" style="left:162.7px;top:634.5px;" width="9.5" height="11" viewBox="0 0 9.5 11"><path d="M.5 3h8.5v7.5H.5z" fill="#fff"/><path d="M3 3V1.5a1.75 1.75 0 0 1 3.5 0V3" fill="none" stroke="#fff" stroke-width=".9"/><rect x="2.5" y="4.5" width="2" height="2" fill="#f25022"/><rect x="5" y="4.5" width="2" height="2" fill="#7fba00"/><rect x="2.5" y="7" width="2" height="2" fill="#00a4ef"/><rect x="5" y="7" width="2" height="2" fill="#ffb900"/></svg>
<svg class="a" style="left:183.5px;top:635.5px;" width="9.5" height="9" viewBox="0 0 9.5 9"><path d="M0 1h4l1 1.5h4.5V9H0z" fill="#f5c342"/><path d="M2.5 5h4.5v4H2.5z" fill="#2f88d8"/></svg>
<svg class="a" style="left:204.3px;top:635.5px;" width="9" height="9" viewBox="0 0 9 9"><circle cx="4.5" cy="4.5" r="4.3" fill="#db4437"/><path d="M4.5 4.5L8.5 3.2A4.3 4.3 0 0 1 3 8.6z" fill="#f4c20d"/><path d="M4.5 4.5L3 8.6A4.3 4.3 0 0 1 .6 2.4z" fill="#0f9d58"/><circle cx="4.5" cy="4.5" r="1.9" fill="#4285f4" stroke="#fff" stroke-width=".7"/></svg>
<svg class="a" style="left:226.0px;top:636.0px;" width="8" height="8" viewBox="0 0 8 8"><rect width="8" height="8" fill="#f4eee6"/><path d="M1 6l2-3 1.5 2 1.5-1.5L7 6z" fill="#d9822b"/></svg>
<svg class="a" style="left:246.0px;top:636.0px;" width="8" height="8" viewBox="0 0 8 8"><rect width="8" height="8" fill="#fff"/><path d="M4 1l1.5 2.5h-3zM1.5 4.5l1.5 2.5H0zM6.5 4.5L8 7H5z" fill="#d13438"/></svg>
<svg class="a" style="left:266.8px;top:635.5px;" width="7" height="9" viewBox="0 0 7 9"><path d="M1 3q0-2.5 3-2.5Q7 .5 7 4T4 8.5q-2 0-2.5-1.5L1 5z" fill="#1fa84f"/></svg>
<svg class="a" style="left:287.0px;top:635.5px;" width="9" height="9" viewBox="0 0 9 9"><path d="M.5 3V.5H3M6 .5h2.5V3M8.5 6v2.5H6M3 8.5H.5V6" fill="none" stroke="#ddd" stroke-width="1"/><rect x="2.5" y="2.5" width="4" height="4" fill="none" stroke="#ddd" stroke-width=".9"/></svg>
<svg class="a" style="left:305.0px;top:635.0px;" width="11" height="10" viewBox="0 0 11 10"><rect x="0" y="2" width="7" height="7" rx="1" fill="#4b53bc"/><circle cx="8.5" cy="2.5" r="2" fill="#7b83eb"/><path d="M2 4h3M3.5 4v3.5" stroke="#fff" stroke-width="1"/></svg>
<div class="a" style="left:304.0px;top:647.0px;width:13.0px;height:1.0px;background:#b39aa6"></div>
<div class="a" style="left:322.0px;top:632.0px;width:20.0px;height:16.5px;background:#7a3147"></div>
<svg class="a" style="left:326.5px;top:635.0px;" width="10" height="10" viewBox="0 0 10 10"><circle cx="5" cy="5" r="4.8" fill="#e8663b"/><rect x="1" y="2.5" width="5" height="5" rx=".5" fill="#c43e1c"/><text x="2.1" y="6.7" font-size="4.5" font-weight="bold" fill="#fff" font-family="Liberation Sans">P</text></svg>
<div class="a" style="left:323.0px;top:647.0px;width:18.0px;height:1.2px;background:#d6a9b8"></div>
<svg class="a" style="left:733.0px;top:637.0px;" width="8" height="5" viewBox="0 0 8 5"><path d="M.5 4.5L4 1l3.5 3.5" fill="none" stroke="#eee" stroke-width="1"/></svg>
<svg class="a" style="left:745.0px;top:635.5px;" width="11" height="9" viewBox="0 0 11 9"><path d="M2 2.5h7v5H2zM.5 4v2" fill="none" stroke="#eee" stroke-width=".9"/><path d="M2.5 .5l1.5 2" stroke="#eee" stroke-width=".8"/></svg>
<svg class="a" style="left:759.0px;top:635.5px;" width="9" height="9" viewBox="0 0 9 9"><path d="M.5 3h2l2.5-2.5v8L2.5 6h-2z" fill="none" stroke="#eee" stroke-width=".8"/><path d="M6.5 3a2 2 0 0 1 0 3M7.5 1.8a3.8 3.8 0 0 1 0 5.4" fill="none" stroke="#eee" stroke-width=".7"/></svg>
<svg class="a" style="left:773.0px;top:635.5px;" width="9" height="9" viewBox="0 0 9 9"><path d="M.5 8.5A8 8 0 0 1 8.5.5M2.5 8.5a6 6 0 0 1 6-6M4.5 8.5a4 4 0 0 1 4-4" fill="none" stroke="#ccc" stroke-width=".8"/></svg>
<div class="s" style="left:786.0px;top:636.4px;font-size:7.3px;color:#eee;transform:scaleX(0.822);">ENG</div>
<div class="s" style="left:807.0px;top:636.4px;font-size:7.3px;color:#eee;transform:scaleX(0.790);">10:11</div>
<svg class="a" style="left:831.0px;top:635.0px;" width="10" height="10" viewBox="0 0 10 10"><path d="M.5.5h9v7H4L.5 9.5z" fill="none" stroke="#eee" stroke-width=".9"/></svg>
<div class="a" style="left:850.5px;top:632.0px;width:1.0px;height:16.5px;background:#5a3040"></div>
<!--/PPT-->
</body></html>
